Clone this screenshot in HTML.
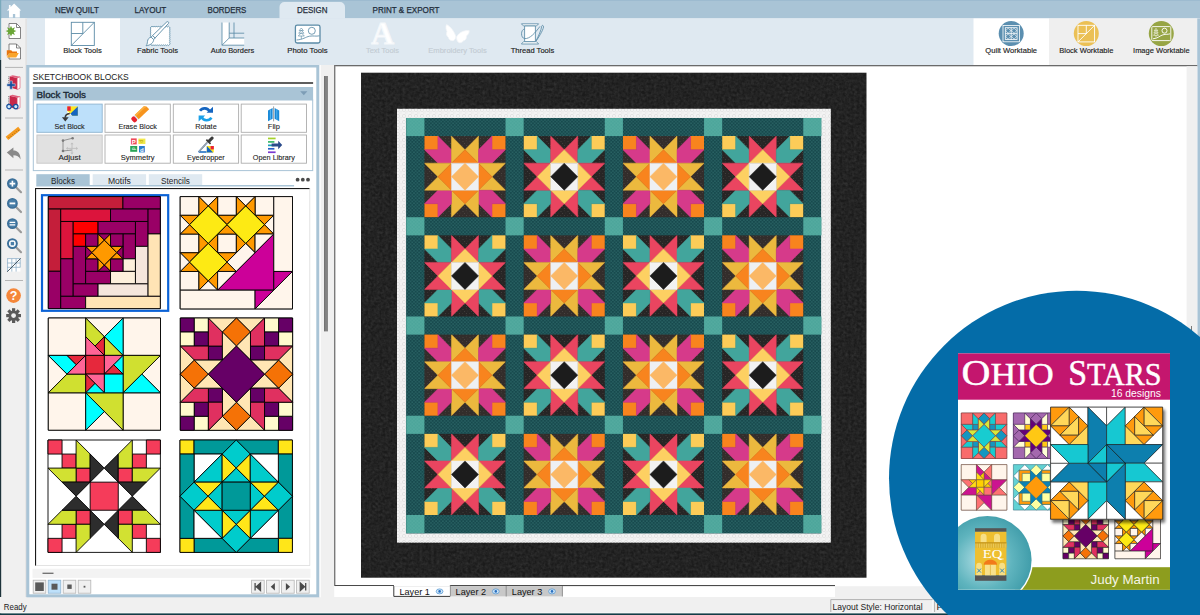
<!DOCTYPE html>
<html><head><meta charset="utf-8"><title>EQ8 - Ohio Stars</title>
<style>
html,body{margin:0;padding:0;background:#fff}
body{width:1200px;height:615px;overflow:hidden;font-family:"Liberation Sans",sans-serif}
svg{display:block}
</style></head><body>
<svg width="1200" height="615" viewBox="0 0 1200 615">
<defs>
<filter id="noiseB" x="0" y="0" width="100%" height="100%"><feTurbulence type="fractalNoise" baseFrequency="0.35" numOctaves="2" seed="3" result="n"/><feColorMatrix type="matrix" values="0 0 0 0 1  0 0 0 0 1  0 0 0 0 1  0.9 0.9 0.9 0 -0.95"/></filter>
<pattern id="dots" width="3.4" height="3.4" patternUnits="userSpaceOnUse"><circle cx="0.9" cy="0.9" r="0.75" fill="#3f8280" opacity="0.6"/><circle cx="2.6" cy="2.6" r="0.75" fill="#3f8280" opacity="0.6"/></pattern>
<pattern id="dots2" width="3.4" height="3.4" patternUnits="userSpaceOnUse"><circle cx="0.9" cy="0.9" r="0.6" fill="#2f8f88" opacity="0.5"/><circle cx="2.6" cy="2.6" r="0.6" fill="#2f8f88" opacity="0.5"/></pattern>
<pattern id="wb" width="6" height="6" patternUnits="userSpaceOnUse"><circle cx="2" cy="2" r="1.7" fill="none" stroke="#dedede" stroke-width="0.7"/><circle cx="5" cy="5" r="1.4" fill="none" stroke="#e4e4e4" stroke-width="0.6"/></pattern>
<pattern id="spk" width="7" height="7" patternUnits="userSpaceOnUse"><circle cx="1" cy="1.4" r="0.45" fill="#8a827c"/><circle cx="4.2" cy="0.8" r="0.35" fill="#7a726c"/><circle cx="2.6" cy="3.6" r="0.45" fill="#8a827c"/><circle cx="5.8" cy="3" r="0.35" fill="#6a625c"/><circle cx="0.8" cy="5.6" r="0.35" fill="#7a726c"/><circle cx="4.4" cy="5.4" r="0.45" fill="#8a827c"/></pattern>
<radialGradient id="eqg" cx="0.45" cy="0.5" r="0.6"><stop offset="0" stop-color="#b4e0e6"/><stop offset="0.55" stop-color="#5fb4be"/><stop offset="1" stop-color="#3a98a6"/></radialGradient>
<linearGradient id="barg" x1="0" x2="1" y1="0" y2="0"><stop offset="0" stop-color="#6e6e6e"/><stop offset="0.5" stop-color="#888"/><stop offset="1" stop-color="#7a7a7a"/></linearGradient>
<filter id="shadow" x="-10%" y="-10%" width="130%" height="130%"><feGaussianBlur in="SourceAlpha" stdDeviation="1.6"/><feOffset dx="2" dy="2.5"/><feComponentTransfer><feFuncA type="linear" slope="0.55"/></feComponentTransfer><feMerge><feMergeNode/><feMergeNode in="SourceGraphic"/></feMerge></filter>
</defs>
<rect x="0" y="0" width="1200" height="615" fill="#ffffff"/>
<rect x="0" y="0" width="1200" height="18.5" fill="#a9c4d6"/>
<rect x="0" y="0" width="1200" height="1" fill="#9dbbd0"/>
<rect x="26" y="18.5" width="1174" height="46.5" fill="#dfe9f1"/>
<path d="M279.5 18.6 V7 a5 5 0 0 1 5 -5 H340 a5 5 0 0 1 5 5 V18.6 Z" fill="#dfe9f1"/>
<text x="55" y="13.2" font-size="9" font-weight="normal" fill="#1f2d3a" text-anchor="start" font-family="Liberation Sans" textLength="43.8" lengthAdjust="spacingAndGlyphs" stroke="#1f2d3a" stroke-width="0.25">NEW QUILT</text>
<text x="134.5" y="13.2" font-size="9" font-weight="normal" fill="#1f2d3a" text-anchor="start" font-family="Liberation Sans" textLength="31.8" lengthAdjust="spacingAndGlyphs" stroke="#1f2d3a" stroke-width="0.25">LAYOUT</text>
<text x="207.5" y="13.2" font-size="9" font-weight="normal" fill="#1f2d3a" text-anchor="start" font-family="Liberation Sans" textLength="38.8" lengthAdjust="spacingAndGlyphs" stroke="#1f2d3a" stroke-width="0.25">BORDERS</text>
<text x="297" y="13.2" font-size="9" font-weight="normal" fill="#1f2d3a" text-anchor="start" font-family="Liberation Sans" textLength="30.5" lengthAdjust="spacingAndGlyphs" stroke="#1f2d3a" stroke-width="0.25">DESIGN</text>
<text x="372.5" y="13.2" font-size="9" font-weight="normal" fill="#1f2d3a" text-anchor="start" font-family="Liberation Sans" textLength="67" lengthAdjust="spacingAndGlyphs" stroke="#1f2d3a" stroke-width="0.25">PRINT &amp; EXPORT</text>
<path d="M14.1 3.6 L21.2 10.6 H19.8 V17.4 H15.2 V13.9 H12.9 V17.4 H9 V10.6 H6.8 L8.9 8.5 V4.9 H10.6 V6.9 Z" fill="#fff"/>
<rect x="45" y="18.5" width="75" height="46.5" fill="#ffffff"/>
<text x="82.5" y="53.4" font-size="8" font-weight="normal" fill="#222" text-anchor="middle" font-family="Liberation Sans" textLength="38.5" lengthAdjust="spacingAndGlyphs" stroke="#222" stroke-width="0.15">Block Tools</text>
<text x="157.5" y="53.4" font-size="8" font-weight="normal" fill="#222" text-anchor="middle" font-family="Liberation Sans" textLength="41" lengthAdjust="spacingAndGlyphs" stroke="#222" stroke-width="0.15">Fabric Tools</text>
<text x="232.5" y="53.4" font-size="8" font-weight="normal" fill="#222" text-anchor="middle" font-family="Liberation Sans" textLength="43.5" lengthAdjust="spacingAndGlyphs" stroke="#222" stroke-width="0.15">Auto Borders</text>
<text x="307.5" y="53.4" font-size="8" font-weight="normal" fill="#222" text-anchor="middle" font-family="Liberation Sans" textLength="40.5" lengthAdjust="spacingAndGlyphs" stroke="#222" stroke-width="0.15">Photo Tools</text>
<text x="382.5" y="53.4" font-size="8" font-weight="normal" fill="#c3ccd3" text-anchor="middle" font-family="Liberation Sans" textLength="33" lengthAdjust="spacingAndGlyphs" stroke="#c3ccd3" stroke-width="0.15">Text Tools</text>
<text x="457.5" y="53.4" font-size="8" font-weight="normal" fill="#c3ccd3" text-anchor="middle" font-family="Liberation Sans" textLength="58.5" lengthAdjust="spacingAndGlyphs" stroke="#c3ccd3" stroke-width="0.15">Embroidery Tools</text>
<text x="532.5" y="53.4" font-size="8" font-weight="normal" fill="#222" text-anchor="middle" font-family="Liberation Sans" textLength="43.5" lengthAdjust="spacingAndGlyphs" stroke="#222" stroke-width="0.15">Thread Tools</text>
<g fill="none" stroke="#5b8ba6" stroke-width="0.9"><rect x="71.3" y="22.3" width="23" height="23.2"/><path d="M71.3 45.5 L94.3 22.3 M71.3 33.5 H82.8 M82.8 22.3 V33.9"/></g>
<path d="M151 27 L152.022 26.2 L153.044 27 L154.067 26.2 L155.089 27 L156.111 26.2 L157.133 27 L158.156 26.2 L159.178 27 L160.2 26.2 L161.222 27 L162.244 26.2 L163.267 27 L164.289 26.2 L165.311 27 L166.333 26.2 L167.356 27 L168.378 26.2 L169.4 27 L170.2 27.9889 L169.4 28.9778 L170.2 29.9667 L169.4 30.9556 L170.2 31.9444 L169.4 32.9333 L170.2 33.9222 L169.4 34.9111 L170.2 35.9 L169.4 36.8889 L170.2 37.8778 L169.4 38.8667 L170.2 39.8556 L169.4 40.8444 L170.2 41.8333 L169.4 42.8222 L170.2 43.8111 L169.4 44.8 L168.378 45.6 L167.356 44.8 L166.333 45.6 L165.311 44.8 L164.289 45.6 L163.267 44.8 L162.244 45.6 L161.222 44.8 L160.2 45.6 L159.178 44.8 L158.156 45.6 L157.133 44.8 L156.111 45.6 L155.089 44.8 L154.067 45.6 L153.044 44.8 L152.022 45.6 L151 44.8 L150.2 43.8111 L151 42.8222 L150.2 41.8333 L151 40.8444 L150.2 39.8556 L151 38.8667 L150.2 37.8778 L151 36.8889 L150.2 35.9 L151 34.9111 L150.2 33.9222 L151 32.9333 L150.2 31.9444 L151 30.9556 L150.2 29.9667 L151 28.9778 L150.2 27.9889 L151 27 Z" fill="#fff" stroke="#5b8ba6" stroke-width="0.8"/>
<g stroke="#5b8ba6" stroke-width="0.9" fill="#fff" stroke-linejoin="round"><path d="M166.9 21.8 c1.2 -0.6 2.2 0.4 1.6 1.6 l-13.4 14.6 l-2.6 -2.4 Z"/><path d="M152.5 35.6 l2.6 2.4 l-1.4 1.6 l-2.6 -2.4 Z"/><path d="M151.1 37.2 l2.6 2.4 c-0.2 3 -3 5.6 -7.6 6.2 c1.6 -1.8 1 -4 1.8 -6 c0.6 -1.6 1.8 -2.2 3.2 -2.6 Z"/></g>
<path d="M222 22.5 V45.2 H244.2 V38 H229.2 V22.5 Z" fill="#fff"/><g fill="none" stroke="#5b8ba6" stroke-width="0.85"><path d="M222 22.5 V45.2 H244.2 M229.2 22.5 V38 H244.2 M222 45.2 L229.2 38 M234 22.5 V38 M229.2 33.2 H244.2"/></g>
<g fill="none" stroke="#5b8ba6" stroke-width="0.85"><rect x="295.4" y="25.2" width="24.6" height="17.8" rx="1.8" fill="#fff" stroke-width="1.3"/><circle cx="311.8" cy="30.8" r="3.5"/><path d="M296.5 40 C303 39.6 305.5 37 309.5 36.2 C313 35.5 316 36.6 319.5 35.8"/><path d="M301.3 28 l-2.1 2.6 h4.2 Z M301.3 30.2 l-2.6 3 h5.2 Z M301.3 32.8 l-3 3.2 h6 Z M301.3 36 v3" stroke-width="0.65"/></g>
<text x="382.6" y="44.3" font-size="31.5" font-weight="bold" fill="#ffffff" text-anchor="middle" font-family="Liberation Serif" stroke="#f4f7fa" stroke-width="1.1">A</text>
<g fill="#ffffff" stroke="#f2f5f8" stroke-width="0.8"><path d="M455.8 36.2 C454.2 31.5 450.5 26.5 446.6 24.6 C445.4 27 446 29.6 447 31.4 C446 33.6 446.6 36.2 448.4 37.4 C448.8 39.6 451.4 41.4 453.6 40.4 C455 39.8 455.8 38 455.8 36.2 Z"/><path d="M456.6 37 C458.6 32.8 463.8 30 469.2 30.6 C469.4 33 468 35 466.4 36 C466.8 38.4 465.4 40.6 463.2 40.8 C462.6 42.4 460 43.4 458.4 42.2 C457 41.2 456.4 39 456.6 37 Z"/></g>
<g fill="none" stroke="#5b8ba6" stroke-width="0.85" stroke-linejoin="round"><path d="M521.4 23.8 h17.2 l-2.2 2.2 h-12.8 Z" fill="#fff"/><path d="M523.6 41.6 h12.8 l2.2 2.4 h-17.2 Z" fill="#fff"/><rect x="524.6" y="26" width="10.8" height="15.6" fill="#fff"/><path d="M524.6 29 C520.5 29.5 520.5 38 524.6 38.6 C530 39 535 33 540 26.4"/><path d="M543.4 26 C544.4 27.6 539.6 36.4 536 41 C538.6 36 541.4 29.6 541.6 26.6 C541.8 25.2 542.8 25 543.4 26 Z"/></g>
<rect x="973.5" y="18.5" width="75.5" height="46.5" fill="#ffffff"/>
<rect x="1049" y="18.5" width="148.5" height="46.5" fill="#efefef"/>
<circle cx="1011.2" cy="33.6" r="12.5" fill="#5b8fb0"/>
<text x="1011.2" y="53.4" font-size="8" font-weight="normal" fill="#222" text-anchor="middle" font-family="Liberation Sans" textLength="51.7" lengthAdjust="spacingAndGlyphs" stroke="#222" stroke-width="0.15">Quilt Worktable</text>
<circle cx="1086.3" cy="33.6" r="12.5" fill="#ebc055"/>
<text x="1086.3" y="53.4" font-size="8" font-weight="normal" fill="#222" text-anchor="middle" font-family="Liberation Sans" textLength="54.2" lengthAdjust="spacingAndGlyphs" stroke="#222" stroke-width="0.15">Block Worktable</text>
<circle cx="1161.3" cy="33.6" r="12.5" fill="#97a545"/>
<text x="1161.3" y="53.4" font-size="8" font-weight="normal" fill="#222" text-anchor="middle" font-family="Liberation Sans" textLength="56.5" lengthAdjust="spacingAndGlyphs" stroke="#222" stroke-width="0.15">Image Worktable</text>
<g fill="none" stroke="#fff" stroke-width="0.8"><rect x="1003" y="25.4" width="16.4" height="16.4"/><rect x="1005.3" y="27.7" width="11.8" height="11.8"/><path d="M1005.3 33.6 h11.8 M1011.2 27.7 v11.8"/><path d="M1008.2 28.2 l2.6 2.5 l-2.6 2.5 l-2.6 -2.5 Z M1014.1 28.2 l2.6 2.5 l-2.6 2.5 l-2.6 -2.5 Z M1008.2 34 l2.6 2.5 l-2.6 2.5 l-2.6 -2.5 Z M1014.1 34 l2.6 2.5 l-2.6 2.5 l-2.6 -2.5 Z" stroke-width="0.6"/></g>
<g fill="none" stroke="#fff" stroke-width="0.9"><rect x="1078" y="25.3" width="16.6" height="16.6"/><path d="M1078 41.9 L1094.6 25.3 M1078 33.6 h8.3 M1086.3 25.3 v8.6"/></g>
<g fill="none" stroke="#fff" stroke-width="0.9"><rect x="1151.8" y="26.6" width="19" height="14" rx="1"/><circle cx="1164.5" cy="30.7" r="2.5"/><path d="M1153 38.8 C1158 38.4 1160 35.6 1163 34.8 C1166 34 1168 34.6 1170 33.8"/><path d="M1156 28.4 l-1.8 2.4 h3.6 Z M1156 30.4 l-2.2 2.6 h4.4 Z M1156 32.6 l-2.5 2.7 h5 Z M1156 35.3 v2" stroke-width="0.6"/></g>
<rect x="1197.3" y="18.5" width="2.7" height="600" fill="#a9c4d6"/>
<rect x="334" y="65" width="863.3" height="1.3" fill="#6a6a6a"/>
<rect x="0" y="18.5" width="27" height="579" fill="#fbfbfb"/>
<rect x="1.5" y="18.5" width="24.2" height="578.5" fill="#f0f0f0"/>
<rect x="0" y="0" width="1.2" height="60" fill="#7aaabc"/>
<rect x="0" y="60" width="1.2" height="555" fill="#1d333b"/>
<rect x="25.7" y="18.5" width="0.8" height="578.5" fill="#c9c9c9"/>
<rect x="26.5" y="65" width="3" height="532" fill="#a9c4d6"/>
<rect x="5" y="66.9" width="18" height="1" fill="#b5b5b5"/>
<rect x="5" y="117.5" width="18" height="1" fill="#b5b5b5"/>
<rect x="5" y="169.5" width="18" height="1" fill="#b5b5b5"/>
<rect x="5" y="280" width="18" height="1" fill="#b5b5b5"/>
<path d="M9 23.5 h7.5 l4 4 v11 h-11.5 Z" fill="#fff" stroke="#666" stroke-width="0.8"/><path d="M16.5 23.5 v4 h4" fill="none" stroke="#666" stroke-width="0.8"/>
<path d="M11 25.8 l1.2 2.6 l2.7 -1.2 l-1.2 2.7 l2.7 1.2 l-2.7 1.2 l1.2 2.7 l-2.7 -1.2 l-1.2 2.7 l-1.2 -2.7 l-2.7 1.2 l1.2 -2.7 l-2.7 -1.2 l2.7 -1.2 l-1.2 -2.7 l2.7 1.2 Z" fill="#6aa636"/>
<path d="M9 44 h7.5 l4 4 v11 h-11.5 Z" fill="#fff" stroke="#666" stroke-width="0.8"/><path d="M16.5 44 v4 h4" fill="none" stroke="#666" stroke-width="0.8"/>
<path d="M6.8 50.2 h4.4 l1.2 1.4 h4.6 v1.6 h-8 l-2.2 3.4 Z" fill="#e8760e"/><path d="M9.4 53 h9.4 l-2.6 4.4 h-9.4 Z" fill="#f9a52c"/>
<path d="M9.6 76.2 l7.6 1.8 v11.6 l-7.6 -2 Z" fill="#c8284a"/><path d="M17.2 78 l2.8 -1.2 v11.4 l-2.8 1.4 Z" fill="#fff" stroke="#d8506a" stroke-width="0.6"/><path d="M9.6 76.2 l7.6 1.8 l2.8 -1.2 l-7.4 -1.6 Z" fill="#e0607c"/><path d="M8.7 76.4 v8.4" stroke="#555" stroke-width="0.8" stroke-dasharray="0.9 0.9"/>
<path d="M6.9 83.8 h2.9 v-2.9 h2.5 v2.9 h2.9 v2.5 h-2.9 v2.9 h-2.5 v-2.9 h-2.9 Z" fill="#174f9e" stroke="#f0f0f0" stroke-width="0.5"/>
<path d="M9.6 95.8 l7.6 1.8 v11.6 l-7.6 -2 Z" fill="#c8284a"/><path d="M17.2 97.6 l2.8 -1.2 v11.4 l-2.8 1.4 Z" fill="#fff" stroke="#d8506a" stroke-width="0.6"/><path d="M9.6 95.8 l7.6 1.8 l2.8 -1.2 l-7.4 -1.6 Z" fill="#e0607c"/><path d="M8.7 96 v8.4" stroke="#555" stroke-width="0.8" stroke-dasharray="0.9 0.9"/>
<g fill="#cfe9fa" stroke="#174f9e" stroke-width="1.2"><circle cx="9" cy="106.6" r="2.2"/><circle cx="15.8" cy="106.6" r="2.2"/></g><path d="M11.2 106.4 h2.4" stroke="#174f9e" stroke-width="1.1"/>
<g transform="translate(13.2 133.4) rotate(-38.6)"><rect x="-8" y="-2" width="16" height="4" fill="#f59a1e"/><path d="M-6 0.2 v1.2 M-3.6 0.2 v1.2 M-1.2 0.2 v1.2 M1.2 0.2 v1.2 M3.6 0.2 v1.2 M6 0.2 v1.2" stroke="#8a5a10" stroke-width="0.7"/></g>
<path d="M6.8 152.6 l6.6 -5 v3 c4 0 7 2.6 7.2 8.8 c-1.6 -3.2 -3.8 -4.2 -7.2 -4.2 v3 Z" fill="#8a8a8a"/>
<path d="M16 187.2 l5 5" stroke="#9a9a9a" stroke-width="2.2" stroke-linecap="round"/>
<circle cx="12.4" cy="183.6" r="4.6" fill="#4a7fa8" stroke="#3a6e98" stroke-width="1.6"/>
<path d="M9.6 183.6 h5.6 M12.4 180.8 v5.6" stroke="#fff" stroke-width="1.6"/>
<path d="M16 207 l5 5" stroke="#9a9a9a" stroke-width="2.2" stroke-linecap="round"/>
<circle cx="12.4" cy="203.4" r="4.6" fill="#4a7fa8" stroke="#3a6e98" stroke-width="1.6"/>
<path d="M9.6 203.4 h5.6" stroke="#fff" stroke-width="1.8"/>
<path d="M16 227.2 l5 5" stroke="#9a9a9a" stroke-width="2.2" stroke-linecap="round"/>
<circle cx="12.4" cy="223.6" r="4.6" fill="#4a7fa8" stroke="#3a6e98" stroke-width="1.6"/>
<path d="M9.6 222.3 h5.6 M9.6 224.9 h5.6" stroke="#fff" stroke-width="1.3"/>
<path d="M16 247.2 l5 5" stroke="#9a9a9a" stroke-width="2.2" stroke-linecap="round"/>
<circle cx="12.4" cy="243.6" r="4.6" fill="#4a7fa8" stroke="#3a6e98" stroke-width="1.6"/>
<circle cx="12.4" cy="243.6" r="3.4" fill="#fff"/><rect x="10.7" y="241.9" width="3.4" height="3.4" fill="#4a7fa8"/>
<rect x="7.2" y="258.6" width="13.2" height="13" fill="#fff"/><g stroke="#8fb0c8" stroke-width="0.8" fill="none"><path d="M7.2 258.6 h13.2 M7.2 263 h13.2 M7.2 267.3 h13.2 M7.6 258.6 v13 M11.8 258.6 v13 M16.1 258.6 v13 M20.2 258.6 v8.6"/></g><path d="M7.2 271.8 L20.6 258.4" stroke="#3a4a55" stroke-width="0.9"/>
<circle cx="13.6" cy="295.6" r="7.3" fill="#f5873a"/>
<text x="13.6" y="300.2" font-size="12.5" font-weight="bold" fill="#fff" text-anchor="middle" font-family="Liberation Sans">?</text>
<g transform="translate(13.6 315.6)"><g fill="#5a5a5a"><rect x="-1.6" y="-7.4" width="3.2" height="4" transform="rotate(0)"/><rect x="-1.6" y="-7.4" width="3.2" height="4" transform="rotate(45)"/><rect x="-1.6" y="-7.4" width="3.2" height="4" transform="rotate(90)"/><rect x="-1.6" y="-7.4" width="3.2" height="4" transform="rotate(135)"/><rect x="-1.6" y="-7.4" width="3.2" height="4" transform="rotate(180)"/><rect x="-1.6" y="-7.4" width="3.2" height="4" transform="rotate(225)"/><rect x="-1.6" y="-7.4" width="3.2" height="4" transform="rotate(270)"/><rect x="-1.6" y="-7.4" width="3.2" height="4" transform="rotate(315)"/></g><circle r="5.2" fill="#5a5a5a"/><circle r="2.4" fill="#f0f0f0"/></g>
<rect x="0" y="597" width="1200" height="16.4" fill="#f0f0f0"/>
<rect x="0" y="612.5" width="1200" height="0.9" fill="#fafafa"/>
<rect x="0" y="613.4" width="1200" height="1.6" fill="#123c46"/>
<text x="3.8" y="609.6" font-size="9.5" font-weight="normal" fill="#222" text-anchor="start" font-family="Liberation Sans" textLength="22.8" lengthAdjust="spacingAndGlyphs">Ready</text>
<rect x="830.8" y="599.6" width="102" height="12.4" fill="#f0f0f0"/>
<path d="M830.8 612 V599.6 H932.8" fill="none" stroke="#a0a0a0" stroke-width="0.8"/><path d="M932.8 599.6 V612" fill="none" stroke="#fff" stroke-width="0.8"/>
<path d="M934.6 612 V599.6 H1000" fill="none" stroke="#a0a0a0" stroke-width="0.8"/>
<text x="832.6" y="609.6" font-size="9.5" font-weight="normal" fill="#222" text-anchor="start" font-family="Liberation Sans" textLength="90" lengthAdjust="spacingAndGlyphs">Layout Style: Horizontal</text>
<text x="936.6" y="609.6" font-size="9.5" font-weight="normal" fill="#222" text-anchor="start" font-family="Liberation Sans">Fi</text>
<rect x="26.5" y="65" width="293" height="532.3" fill="#a9c4d6"/>
<rect x="29.3" y="67.5" width="287" height="526.8" fill="#ffffff"/>
<rect x="319.5" y="65" width="1.6" height="532.3" fill="#fbfbfb"/>
<rect x="321" y="65" width="13.2" height="532.3" fill="#f0f0f0"/>
<rect x="324" y="76" width="3.9" height="255.4" fill="url(#barg)"/>
<rect x="334" y="65" width="1.4" height="521" fill="#7a7a7a"/>
<text x="32.8" y="80.1" font-size="9.4" font-weight="normal" fill="#222" text-anchor="start" font-family="Liberation Sans" textLength="96" lengthAdjust="spacingAndGlyphs">SKETCHBOOK BLOCKS</text>
<rect x="32.8" y="82.3" width="280.3" height="1.4" fill="#1a1a1a"/>
<rect x="32.8" y="87" width="280.3" height="13.2" fill="#a9c4d6"/>
<text x="36.4" y="97.5" font-size="9.3" font-weight="normal" fill="#1c2a36" text-anchor="start" font-family="Liberation Sans" textLength="49.6" lengthAdjust="spacingAndGlyphs" stroke="#1c2a36" stroke-width="0.35">Block Tools</text>
<path d="M300.2 91.2 h7.2 l-3.6 4 Z" fill="#7d9db6"/>
<rect x="33.3" y="100" width="279.4" height="70.6" fill="#fff" stroke="#a9c4d6" stroke-width="1"/>
<rect x="36.9" y="104.1" width="65.3" height="28.2" fill="#bde0fa" stroke="#8fb4d0" stroke-width="0.9"/>
<text x="69.55" y="128.6" font-size="8" font-weight="normal" fill="#1f1f1f" text-anchor="middle" font-family="Liberation Sans" textLength="30.3" lengthAdjust="spacingAndGlyphs" stroke="#1f1f1f" stroke-width="0.12">Set Block</text>
<rect x="105" y="104.1" width="65.3" height="28.2" fill="#ffffff" stroke="#adadad" stroke-width="0.9"/>
<text x="137.65" y="128.6" font-size="8" font-weight="normal" fill="#1f1f1f" text-anchor="middle" font-family="Liberation Sans" textLength="38.5" lengthAdjust="spacingAndGlyphs" stroke="#1f1f1f" stroke-width="0.12">Erase Block</text>
<rect x="173.3" y="104.1" width="65.3" height="28.2" fill="#ffffff" stroke="#adadad" stroke-width="0.9"/>
<text x="205.95" y="128.6" font-size="8" font-weight="normal" fill="#1f1f1f" text-anchor="middle" font-family="Liberation Sans" textLength="21.6" lengthAdjust="spacingAndGlyphs" stroke="#1f1f1f" stroke-width="0.12">Rotate</text>
<rect x="241.2" y="104.1" width="65.3" height="28.2" fill="#ffffff" stroke="#adadad" stroke-width="0.9"/>
<text x="273.85" y="128.6" font-size="8" font-weight="normal" fill="#1f1f1f" text-anchor="middle" font-family="Liberation Sans" textLength="12" lengthAdjust="spacingAndGlyphs" stroke="#1f1f1f" stroke-width="0.12">Flip</text>
<rect x="36.9" y="135" width="65.3" height="28.2" fill="#e1e1e1" stroke="#c6c6c6" stroke-width="0.9"/>
<text x="69.55" y="159.5" font-size="8" font-weight="normal" fill="#1f1f1f" text-anchor="middle" font-family="Liberation Sans" textLength="22.2" lengthAdjust="spacingAndGlyphs" stroke="#1f1f1f" stroke-width="0.12">Adjust</text>
<rect x="105" y="135" width="65.3" height="28.2" fill="#ffffff" stroke="#adadad" stroke-width="0.9"/>
<text x="137.65" y="159.5" font-size="8" font-weight="normal" fill="#1f1f1f" text-anchor="middle" font-family="Liberation Sans" textLength="33.8" lengthAdjust="spacingAndGlyphs" stroke="#1f1f1f" stroke-width="0.12">Symmetry</text>
<rect x="173.3" y="135" width="65.3" height="28.2" fill="#ffffff" stroke="#adadad" stroke-width="0.9"/>
<text x="205.95" y="159.5" font-size="8" font-weight="normal" fill="#1f1f1f" text-anchor="middle" font-family="Liberation Sans" textLength="37.7" lengthAdjust="spacingAndGlyphs" stroke="#1f1f1f" stroke-width="0.12">Eyedropper</text>
<rect x="241.2" y="135" width="65.3" height="28.2" fill="#ffffff" stroke="#adadad" stroke-width="0.9"/>
<text x="273.85" y="159.5" font-size="8" font-weight="normal" fill="#1f1f1f" text-anchor="middle" font-family="Liberation Sans" textLength="42" lengthAdjust="spacingAndGlyphs" stroke="#1f1f1f" stroke-width="0.12">Open Library</text>
<g><rect x="67.3" y="106.4" width="10.5" height="9.4" fill="#ffe61e"/><path d="M77.8 106.4 v9.4 h-9.6 Z" fill="#1565c0"/><path d="M67.3 110.8 v5 h5 Z" fill="#fff"/><rect x="67.3" y="106.4" width="3.4" height="4.4" fill="#e8203a"/><path d="M69.8 113.6 c-3.2 0.4 -4.6 2 -4.6 4.2" fill="none" stroke="#3a3a3a" stroke-width="1.5"/><path d="M61.9 117.3 h6.8 l-3.4 4.3 Z" fill="#3a3a3a"/></g>
<g transform="translate(140.3 113.6) rotate(-43)"><path d="M-5 -2.9 H7.6 L9.4 -0.6 V2.9 H-5 Z" fill="#f7941d"/><path d="M-5 -2.9 H7.6 L9.4 -0.6 L7 -1.2 H-5 Z" fill="#fbb040"/><rect x="-6.2" y="-2.9" width="1.2" height="5.8" fill="#d6e6f2"/><rect x="-10.6" y="-3" width="4.5" height="6" rx="1.8" fill="#e8232e"/></g>
<g fill="none" stroke-width="2.6"><path d="M200 110.8 a5.6 5.6 0 0 1 9.6 0.6" stroke="#1565c0"/><path d="M211.4 117.6 a5.6 5.6 0 0 1 -9.8 -0.4" stroke="#1aa0e8"/></g><path d="M206.6 112.8 h6.4 v-6 Z" fill="#1565c0"/><path d="M205.2 115.6 h-6.6 v6 Z" fill="#1aa0e8"/>
<path d="M272.6 108 l-4.6 2.6 v10.6 l4.6 -2.4 Z" fill="#1a8ad8"/><path d="M274.6 108 l4.6 2.6 v10.6 l-4.6 -2.4 Z" fill="#1a8ad8"/><path d="M270.4 109.2 v10.8 M276.8 109.2 v10.8" stroke="#56b4f0" stroke-width="1"/><rect x="273.1" y="106.4" width="1" height="15" fill="#9aa0a6"/>
<g stroke="#8a8a8a" stroke-width="0.9" fill="none"><path d="M63 140.6 l9.6 -2.4 M63 140.6 v10.4 l9 -1"/><path d="M72 143.8 v9 M67.4 148.4 h9.4" stroke="#bdbdbd"/></g><g fill="#7a7a7a"><circle cx="63" cy="140.6" r="1.3"/><circle cx="72.6" cy="138.2" r="1.3"/><circle cx="63" cy="151" r="1.3"/></g><path d="M72 142.4 l1.6 1.8 h-3.2 Z M72 154.4 l1.6 -1.8 h-3.2 Z M66 148.4 l1.8 -1.6 v3.2 Z M78 148.4 l-1.8 -1.6 v3.2 Z" fill="#bdbdbd"/>
<rect x="130.9" y="138.4" width="5.8" height="6" fill="#ee4a5a"/><rect x="138.4" y="138.6" width="7" height="5.4" fill="#f2e84a"/><rect x="130.2" y="146" width="7" height="5.8" fill="#2aa456"/><rect x="139" y="146" width="5.8" height="6.4" fill="#2a7cd0"/>
<text x="133.8" y="143.8" font-size="6" font-weight="bold" fill="#fff" text-anchor="middle" font-family="Liberation Sans">P</text>
<text x="141.9" y="151.6" font-size="6" font-weight="bold" fill="#fff" text-anchor="middle" font-family="Liberation Sans">d</text>
<text x="141.9" y="143.4" font-size="5" font-weight="bold" fill="#c8b820" text-anchor="middle" font-family="Liberation Sans" transform="rotate(90 141.9 141.4)">p</text>
<text x="133.7" y="150.6" font-size="5" font-weight="bold" fill="#bfe6cc" text-anchor="middle" font-family="Liberation Sans" transform="rotate(90 133.7 148.9)">d</text>
<path d="M198.6 152 l8.6 -9.4 M198.6 152 h8" stroke="#1565c0" stroke-width="1.5" fill="none"/><path d="M199 151.6 l9 -10.4" stroke="#a8a8a8" stroke-width="1.4"/><g transform="translate(209.6 140.6) rotate(45)"><rect x="-1.5" y="-5" width="3" height="7" rx="1.2" fill="#3a3a3a"/><rect x="-3" y="0.8" width="6" height="1.6" fill="#3a3a3a"/></g><rect x="206.8" y="146" width="7" height="6.4" fill="#ffe61e"/><path d="M206.8 146 v6.4 h6.4 Z" fill="#1565c0"/><rect x="210.6" y="146" width="3.2" height="3.4" fill="#e8203a"/>
<rect x="268" y="137.6" width="7.6" height="1.7" fill="#a4d12a"/>
<rect x="268" y="141.05" width="6.4" height="1.7" fill="#3ab86a"/>
<rect x="268" y="144.5" width="6.4" height="1.7" fill="#1aa0b8"/>
<rect x="268" y="147.95" width="6.4" height="1.7" fill="#2a60c8"/>
<rect x="268" y="151.4" width="7.6" height="1.7" fill="#7a3ad0"/>
<path d="M271.6 143.4 h6.6 v-2.6 l4 4.2 l-4 4.2 v-2.6 h-6.6 Z" fill="#2a4a8a"/>
<rect x="36.3" y="174.2" width="53.4" height="11.2" fill="#a9c4d6"/>
<rect x="92.7" y="174.2" width="53.4" height="11.2" fill="#dfe9f1"/>
<rect x="148.8" y="174.2" width="53.4" height="11.2" fill="#dfe9f1"/>
<rect x="36.3" y="185" width="257.8" height="1.5" fill="#a9c4d6"/>
<text x="63" y="183.6" font-size="8.5" font-weight="normal" fill="#1f1f1f" text-anchor="middle" font-family="Liberation Sans" textLength="24" lengthAdjust="spacingAndGlyphs">Blocks</text>
<text x="119.4" y="183.6" font-size="8.5" font-weight="normal" fill="#1f1f1f" text-anchor="middle" font-family="Liberation Sans" textLength="23" lengthAdjust="spacingAndGlyphs">Motifs</text>
<text x="175.5" y="183.6" font-size="8.5" font-weight="normal" fill="#1f1f1f" text-anchor="middle" font-family="Liberation Sans" textLength="28.8" lengthAdjust="spacingAndGlyphs">Stencils</text>
<circle cx="297.6" cy="179.7" r="1.9" fill="#4a4a4a"/>
<circle cx="302.8" cy="179.7" r="1.9" fill="#4a4a4a"/>
<circle cx="308" cy="179.7" r="1.9" fill="#4a4a4a"/>
<rect x="35" y="188" width="275" height="1.1" fill="#1a1a1a"/>
<rect x="35" y="188" width="1.1" height="377.6" fill="#1a1a1a"/>
<rect x="309.4" y="188" width="0.8" height="377.6" fill="#dcdcdc"/>
<rect x="36" y="565.2" width="274" height="0.8" fill="#dcdcdc"/>
<rect x="42" y="195.2" width="126.2" height="115.6" fill="#fff" stroke="#0b62d6" stroke-width="2.2"/>
<svg x="48.3" y="196.6" width="112" height="112" viewBox="0 0 9 9" overflow="visible"><g stroke="#000" stroke-width="0.07232" stroke-linejoin="miter" stroke-miterlimit="2"><polygon points="0,0 9,0 9,9 0,9" fill="#990066"/><polygon points="0,0 6,0 6,1 0,1" fill="#c41e3a"/><polygon points="6,0 9,0 9,1 6,1" fill="#990066"/><polygon points="0,1 1,1 1,6 0,6" fill="#c41e3a"/><polygon points="0,6 1,6 1,9 0,9" fill="#990066"/><polygon points="1,8 3,8 3,9 1,9" fill="#990066"/><polygon points="3,8 9,8 9,9 3,9" fill="#ffe4b5"/><polygon points="8,1 9,1 9,3 8,3" fill="#990066"/><polygon points="8,3 9,3 9,8 8,8" fill="#ffe4b5"/><polygon points="1,1 5,1 5,2 1,2" fill="#dc143c"/><polygon points="5,1 8,1 8,2 5,2" fill="#990066"/><polygon points="1,2 2,2 2,5 1,5" fill="#dc143c"/><polygon points="1,5 2,5 2,8 1,8" fill="#990066"/><polygon points="2,7 4,7 4,8 2,8" fill="#990066"/><polygon points="4,7 8,7 8,8 4,8" fill="#f5e6dc"/><polygon points="7,2 8,2 8,4 7,4" fill="#990066"/><polygon points="7,4 8,4 8,7 7,7" fill="#f5e6dc"/><polygon points="2,2 4,2 4,3 2,3" fill="#ff0000"/><polygon points="4,2 7,2 7,3 4,3" fill="#990066"/><polygon points="2,3 3,3 3,4 2,4" fill="#ff0000"/><polygon points="2,4 3,4 3,7 2,7" fill="#990066"/><polygon points="3,6 5,6 5,7 3,7" fill="#990066"/><polygon points="5,6 7,6 7,7 5,7" fill="#fdf0dc"/><polygon points="6,3 7,3 7,5 6,5" fill="#990066"/><polygon points="6,5 7,5 7,6 6,6" fill="#fdf0dc"/><polygon points="3,3 4,3 4,4 3,4" fill="#990066"/><polygon points="5,3 6,3 6,4 5,4" fill="#990066"/><polygon points="3,5 4,5 4,6 3,6" fill="#990066"/><polygon points="5,5 6,5 6,6 5,6" fill="#990066"/><polygon points="4,3 5,3 4.5,3.5" fill="#990066"/><polygon points="5,3 5,4 4.5,3.5" fill="#ff9900"/><polygon points="4,4 4,3 4.5,3.5" fill="#ff9900"/><polygon points="5,4 6,4 5.5,4.5" fill="#ff9900"/><polygon points="6,4 6,5 5.5,4.5" fill="#990066"/><polygon points="6,5 5,5 5.5,4.5" fill="#ff9900"/><polygon points="5,5 5,6 4.5,5.5" fill="#ff9900"/><polygon points="5,6 4,6 4.5,5.5" fill="#990066"/><polygon points="4,6 4,5 4.5,5.5" fill="#ff9900"/><polygon points="3,4 4,4 3.5,4.5" fill="#ff9900"/><polygon points="4,5 3,5 3.5,4.5" fill="#ff9900"/><polygon points="3,5 3,4 3.5,4.5" fill="#990066"/><polygon points="4.5,3.5 5.5,4.5 4.5,5.5 3.5,4.5" fill="#ff9900"/></g></svg>
<svg x="180.2" y="196.6" width="112.3" height="112.3" viewBox="0 0 6 6" overflow="visible"><g stroke="#000" stroke-width="0.04809" stroke-linejoin="miter" stroke-miterlimit="2"><polygon points="0,0 6,0 6,6 0,6" fill="#fff5eb"/><polygon points="0,0 1,0 1,1 0,1" fill="#fff5eb"/><polygon points="2,0 3,0 3,1 2,1" fill="#fff5eb"/><polygon points="4,0 5,0 5,1 4,1" fill="#fff5eb"/><polygon points="0,2 1,2 1,3 0,3" fill="#fff5eb"/><polygon points="2,2 3,2 3,3 2,3" fill="#fff5eb"/><polygon points="0,4 1,4 1,5 0,5" fill="#fff5eb"/><polygon points="1,1 2,1 2,2 1,2" fill="#fdea14"/><polygon points="3,1 4,1 4,2 3,2" fill="#fdea14"/><polygon points="1,3 2,3 2,4 1,4" fill="#fdea14"/><polygon points="1,0 2,0 1.5,0.5" fill="#fff5eb"/><polygon points="2,0 2,1 1.5,0.5" fill="#ff9900"/><polygon points="2,1 1,1 1.5,0.5" fill="#fdea14"/><polygon points="1,1 1,0 1.5,0.5" fill="#ff9900"/><polygon points="3,0 4,0 3.5,0.5" fill="#fff5eb"/><polygon points="4,0 4,1 3.5,0.5" fill="#ff9900"/><polygon points="4,1 3,1 3.5,0.5" fill="#fdea14"/><polygon points="3,1 3,0 3.5,0.5" fill="#ff9900"/><polygon points="0,1 1,1 0.5,1.5" fill="#ff9900"/><polygon points="1,1 1,2 0.5,1.5" fill="#fdea14"/><polygon points="1,2 0,2 0.5,1.5" fill="#ff9900"/><polygon points="0,2 0,1 0.5,1.5" fill="#fff5eb"/><polygon points="2,1 3,1 2.5,1.5" fill="#ff9900"/><polygon points="3,1 3,2 2.5,1.5" fill="#fdea14"/><polygon points="3,2 2,2 2.5,1.5" fill="#ff9900"/><polygon points="2,2 2,1 2.5,1.5" fill="#fdea14"/><polygon points="4,1 5,1 4.5,1.5" fill="#ff9900"/><polygon points="5,1 5,2 4.5,1.5" fill="#fff5eb"/><polygon points="5,2 4,2 4.5,1.5" fill="#ff9900"/><polygon points="4,2 4,1 4.5,1.5" fill="#fdea14"/><polygon points="1,2 2,2 1.5,2.5" fill="#fdea14"/><polygon points="2,2 2,3 1.5,2.5" fill="#ff9900"/><polygon points="2,3 1,3 1.5,2.5" fill="#fdea14"/><polygon points="1,3 1,2 1.5,2.5" fill="#ff9900"/><polygon points="3,2 4,2 3.5,2.5" fill="#fdea14"/><polygon points="4,2 4,3 3.5,2.5" fill="#ff9900"/><polygon points="4,3 3,3 3.5,2.5" fill="#fff5eb"/><polygon points="3,3 3,2 3.5,2.5" fill="#ff9900"/><polygon points="0,3 1,3 0.5,3.5" fill="#ff9900"/><polygon points="1,3 1,4 0.5,3.5" fill="#fdea14"/><polygon points="1,4 0,4 0.5,3.5" fill="#ff9900"/><polygon points="0,4 0,3 0.5,3.5" fill="#fff5eb"/><polygon points="2,3 3,3 2.5,3.5" fill="#ff9900"/><polygon points="3,3 3,4 2.5,3.5" fill="#fff5eb"/><polygon points="3,4 2,4 2.5,3.5" fill="#ff9900"/><polygon points="2,4 2,3 2.5,3.5" fill="#fdea14"/><polygon points="1,4 2,4 1.5,4.5" fill="#fdea14"/><polygon points="2,4 2,5 1.5,4.5" fill="#ff9900"/><polygon points="2,5 1,5 1.5,4.5" fill="#fff5eb"/><polygon points="1,5 1,4 1.5,4.5" fill="#ff9900"/><polygon points="3.5,2.5 4,3 3,4 2.5,3.5" fill="#fff5eb"/><polygon points="4,2 5,2 4,3" fill="#fff5eb"/><polygon points="2,4 3,4 2,5" fill="#fff5eb"/><polygon points="5,2 5,5 2,5" fill="#cc0099"/><polygon points="5,0 6,0 6,4 5,4" fill="#fff5eb"/><polygon points="0,5 4,5 4,6 0,6" fill="#fff5eb"/><polygon points="5,4 6,4 5,5" fill="#cc0099"/><polygon points="4,5 5,5 4,6" fill="#cc0099"/><polygon points="6,4 6,6 4,6" fill="#fff5eb"/><polygon points="1.5,0.5 2.5,1.5 1.5,2.5 0.5,1.5" fill="#fdea14"/><polygon points="3.5,0.5 4.5,1.5 3.5,2.5 2.5,1.5" fill="#fdea14"/><polygon points="1.5,2.5 2.5,3.5 1.5,4.5 0.5,3.5" fill="#fdea14"/></g></svg>
<svg x="48.3" y="318" width="112.2" height="112.2" viewBox="0 0 6 6" overflow="visible"><g stroke="#000" stroke-width="0.04813" stroke-linejoin="miter" stroke-miterlimit="2"><polygon points="0,0 6,0 6,6 0,6" fill="#fff5eb"/><polygon points="0,0 2,0 2,2 0,2" fill="#fff5eb"/><polygon points="4,0 6,0 6,2 4,2" fill="#fff5eb"/><polygon points="0,4 2,4 2,6 0,6" fill="#fff5eb"/><polygon points="4,4 6,4 6,6 4,6" fill="#fff5eb"/><polygon points="2,0 4,0 3,1" fill="#fff5eb"/><polygon points="2,0 3,1 2.5,1.5 2,1" fill="#d0e030"/><polygon points="4,0 4,2 3,1" fill="#00ffff"/><polygon points="3,1 4,2 3,2" fill="#d0e030"/><polygon points="3,1 3,2 2.5,1.5" fill="#e6283c"/><polygon points="2,1 3,2 2,2" fill="#ff6496"/><polygon points="6,2 6,4 5,3" fill="#fff5eb"/><polygon points="4,2 6,2 4,4" fill="#d0e030"/><polygon points="5,3 6,4 4,4" fill="#00ffff"/><polygon points="2,6 3,5 4,6" fill="#fff5eb"/><polygon points="2,4 4,4 4,6" fill="#d0e030"/><polygon points="2,4 3,5 2,6" fill="#00ffff"/><polygon points="0,2 1,3 0,4" fill="#fff5eb"/><polygon points="0,2 1,2 1.5,2.5 1,3" fill="#00ffff"/><polygon points="0,4 1,3 2,3 2,4" fill="#d0e030"/><polygon points="1,2 2,2 1.5,2.5" fill="#e6283c"/><polygon points="2,2 2,3 1,3" fill="#ff6496"/><polygon points="2,2 3,2 3,3 2,3" fill="#e6283c"/><polygon points="3,2 4,2 3,3" fill="#ff6496"/><polygon points="4,2 4,3 3.5,2.5" fill="#00ffff"/><polygon points="3.5,2.5 4,3 3,3" fill="#e6283c"/><polygon points="2,3 3,3 3,4" fill="#ff6496"/><polygon points="2,3 2.5,3.5 2,4" fill="#e6283c"/><polygon points="2,4 2.5,3.5 3,4" fill="#00ffff"/><polygon points="3,3 4,3 4,4 3,4" fill="#00ffff"/></g></svg>
<svg x="180.3" y="318" width="112.3" height="112.3" viewBox="0 0 8 8" overflow="visible"><g stroke="#000" stroke-width="0.06411" stroke-linejoin="miter" stroke-miterlimit="2"><polygon points="0,0 8,0 8,8 0,8" fill="#ffe6b4"/><polygon points="0,0 1,0 1,1 0,1" fill="#660066"/><polygon points="1,0 2,0 2,1 1,1" fill="#fffacd"/><polygon points="0,1 1,1 1,2 0,2" fill="#fffacd"/><polygon points="1,1 2,1 2,2 1,2" fill="#660066"/><polygon points="2,2 3,2 3,3 2,3" fill="#660066"/><polygon points="2,0 3,1 3,2 2,2" fill="#e03060"/><polygon points="0,2 2,2 2,3 1,3" fill="#e03060"/><polygon points="2,0 4,0 3,1" fill="#ffe6b4"/><polygon points="4,0 6,0 5,1" fill="#ffe6b4"/><polygon points="4,0 5,1 4,2 3,1" fill="#f57206"/><polygon points="3,1 4,2 3,3" fill="#ffe6b4"/><polygon points="5,1 5,3 4,2" fill="#ffe6b4"/><polygon points="8,0 8,1 7,1 7,0" fill="#660066"/><polygon points="8,1 8,2 7,2 7,1" fill="#fffacd"/><polygon points="7,0 7,1 6,1 6,0" fill="#fffacd"/><polygon points="7,1 7,2 6,2 6,1" fill="#660066"/><polygon points="6,2 6,3 5,3 5,2" fill="#660066"/><polygon points="8,2 7,3 6,3 6,2" fill="#e03060"/><polygon points="6,0 6,2 5,2 5,1" fill="#e03060"/><polygon points="8,2 8,4 7,3" fill="#ffe6b4"/><polygon points="8,4 8,6 7,5" fill="#ffe6b4"/><polygon points="8,4 7,5 6,4 7,3" fill="#f57206"/><polygon points="7,3 6,4 5,3" fill="#ffe6b4"/><polygon points="7,5 5,5 6,4" fill="#ffe6b4"/><polygon points="8,8 7,8 7,7 8,7" fill="#660066"/><polygon points="7,8 6,8 6,7 7,7" fill="#fffacd"/><polygon points="8,7 7,7 7,6 8,6" fill="#fffacd"/><polygon points="7,7 6,7 6,6 7,6" fill="#660066"/><polygon points="6,6 5,6 5,5 6,5" fill="#660066"/><polygon points="6,8 5,7 5,6 6,6" fill="#e03060"/><polygon points="8,6 6,6 6,5 7,5" fill="#e03060"/><polygon points="6,8 4,8 5,7" fill="#ffe6b4"/><polygon points="4,8 2,8 3,7" fill="#ffe6b4"/><polygon points="4,8 3,7 4,6 5,7" fill="#f57206"/><polygon points="5,7 4,6 5,5" fill="#ffe6b4"/><polygon points="3,7 3,5 4,6" fill="#ffe6b4"/><polygon points="0,8 0,7 1,7 1,8" fill="#660066"/><polygon points="0,7 0,6 1,6 1,7" fill="#fffacd"/><polygon points="1,8 1,7 2,7 2,8" fill="#fffacd"/><polygon points="1,7 1,6 2,6 2,7" fill="#660066"/><polygon points="2,6 2,5 3,5 3,6" fill="#660066"/><polygon points="0,6 1,5 2,5 2,6" fill="#e03060"/><polygon points="2,8 2,6 3,6 3,7" fill="#e03060"/><polygon points="0,6 0,4 1,5" fill="#ffe6b4"/><polygon points="0,4 0,2 1,3" fill="#ffe6b4"/><polygon points="0,4 1,3 2,4 1,5" fill="#f57206"/><polygon points="1,5 2,4 3,5" fill="#ffe6b4"/><polygon points="1,3 3,3 2,4" fill="#ffe6b4"/><polygon points="4,2 6,4 4,6 2,4" fill="#660066"/></g></svg>
<svg x="48" y="440" width="112.4" height="112.4" viewBox="0 0 8 8" overflow="visible"><g stroke="#000" stroke-width="0.06406" stroke-linejoin="miter" stroke-miterlimit="2"><polygon points="0,0 8,0 8,8 0,8" fill="#ffffff"/><polygon points="0,0 1,0 1,1 0,1" fill="#f53c5a"/><polygon points="1,1 2,1 2,2 1,2" fill="#f53c5a"/><polygon points="2,2 3,2 3,3 2,3" fill="#f53c5a"/><polygon points="2,0 3,1 3,2 2,2" fill="#d2e132"/><polygon points="0,2 2,2 2,3 1,3" fill="#d2e132"/><polygon points="3,1 4,2 3,3" fill="#2d2d2d"/><polygon points="5,1 5,3 4,2" fill="#2d2d2d"/><polygon points="8,0 8,1 7,1 7,0" fill="#f53c5a"/><polygon points="7,1 7,2 6,2 6,1" fill="#f53c5a"/><polygon points="6,2 6,3 5,3 5,2" fill="#f53c5a"/><polygon points="8,2 7,3 6,3 6,2" fill="#d2e132"/><polygon points="6,0 6,2 5,2 5,1" fill="#d2e132"/><polygon points="7,3 6,4 5,3" fill="#2d2d2d"/><polygon points="7,5 5,5 6,4" fill="#2d2d2d"/><polygon points="8,8 7,8 7,7 8,7" fill="#f53c5a"/><polygon points="7,7 6,7 6,6 7,6" fill="#f53c5a"/><polygon points="6,6 5,6 5,5 6,5" fill="#f53c5a"/><polygon points="6,8 5,7 5,6 6,6" fill="#d2e132"/><polygon points="8,6 6,6 6,5 7,5" fill="#d2e132"/><polygon points="5,7 4,6 5,5" fill="#2d2d2d"/><polygon points="3,7 3,5 4,6" fill="#2d2d2d"/><polygon points="0,8 0,7 1,7 1,8" fill="#f53c5a"/><polygon points="1,7 1,6 2,6 2,7" fill="#f53c5a"/><polygon points="2,6 2,5 3,5 3,6" fill="#f53c5a"/><polygon points="0,6 1,5 2,5 2,6" fill="#d2e132"/><polygon points="2,8 2,6 3,6 3,7" fill="#d2e132"/><polygon points="1,5 2,4 3,5" fill="#2d2d2d"/><polygon points="1,3 3,3 2,4" fill="#2d2d2d"/><polygon points="3,3 5,3 5,5 3,5" fill="#f53c5a"/></g></svg>
<svg x="180" y="440" width="112.4" height="112.4" viewBox="0 0 8 8" overflow="visible"><g stroke="#000" stroke-width="0.06406" stroke-linejoin="miter" stroke-miterlimit="2"><polygon points="0,0 8,0 8,8 0,8" fill="#ffffff"/><polygon points="0,0 1,0 1,1 0,1" fill="#ffe619"/><polygon points="1,0 4,0 3,1 1,1" fill="#009999"/><polygon points="4,0 7,0 7,1 5,1" fill="#009999"/><polygon points="1,1 3,1 1,3" fill="#ffffff"/><polygon points="3,1 3,3 1,3" fill="#00cccc"/><polygon points="4,0 5,1 4,2 3,1" fill="#00cccc"/><polygon points="3,1 4,2 3,3" fill="#ffe619"/><polygon points="5,1 5,3 4,2" fill="#ffe619"/><polygon points="3,3 4,2 5,3" fill="#00cccc"/><polygon points="8,0 8,1 7,1 7,0" fill="#ffe619"/><polygon points="8,1 8,4 7,3 7,1" fill="#009999"/><polygon points="8,4 8,7 7,7 7,5" fill="#009999"/><polygon points="7,1 7,3 5,1" fill="#ffffff"/><polygon points="7,3 5,3 5,1" fill="#00cccc"/><polygon points="8,4 7,5 6,4 7,3" fill="#00cccc"/><polygon points="7,3 6,4 5,3" fill="#ffe619"/><polygon points="7,5 5,5 6,4" fill="#ffe619"/><polygon points="5,3 6,4 5,5" fill="#00cccc"/><polygon points="8,8 7,8 7,7 8,7" fill="#ffe619"/><polygon points="7,8 4,8 5,7 7,7" fill="#009999"/><polygon points="4,8 1,8 1,7 3,7" fill="#009999"/><polygon points="7,7 5,7 7,5" fill="#ffffff"/><polygon points="5,7 5,5 7,5" fill="#00cccc"/><polygon points="4,8 3,7 4,6 5,7" fill="#00cccc"/><polygon points="5,7 4,6 5,5" fill="#ffe619"/><polygon points="3,7 3,5 4,6" fill="#ffe619"/><polygon points="5,5 4,6 3,5" fill="#00cccc"/><polygon points="0,8 0,7 1,7 1,8" fill="#ffe619"/><polygon points="0,7 0,4 1,5 1,7" fill="#009999"/><polygon points="0,4 0,1 1,1 1,3" fill="#009999"/><polygon points="1,7 1,5 3,7" fill="#ffffff"/><polygon points="1,5 3,5 3,7" fill="#00cccc"/><polygon points="0,4 1,3 2,4 1,5" fill="#00cccc"/><polygon points="1,5 2,4 3,5" fill="#ffe619"/><polygon points="1,3 3,3 2,4" fill="#ffe619"/><polygon points="3,5 2,4 3,3" fill="#00cccc"/><polygon points="3,3 5,3 5,5 3,5" fill="#009999"/></g></svg>
<rect x="32.5" y="568.7" width="278" height="9.2" fill="#f3f3f3"/>
<rect x="42.5" y="572.7" width="11" height="1.1" fill="#555"/>
<rect x="33.2" y="580.2" width="12.6" height="13" fill="#f0f0f0" stroke="#b4b4b4" stroke-width="0.8"/>
<rect x="35.2" y="582.4" width="8.6" height="8.6" fill="#5a5a5a"/>
<rect x="48.2" y="580.2" width="12.6" height="13" fill="#bde0fa" stroke="#8fb4d0" stroke-width="0.8"/>
<rect x="51.5" y="583.7" width="6" height="6" fill="#5a5a5a"/>
<rect x="63.2" y="580.2" width="12.6" height="13" fill="#f0f0f0" stroke="#b4b4b4" stroke-width="0.8"/>
<rect x="67.3" y="584.5" width="4.4" height="4.4" fill="#5a5a5a"/>
<rect x="78.2" y="580.2" width="12.6" height="13" fill="#f0f0f0" stroke="#b4b4b4" stroke-width="0.8"/>
<rect x="83.6" y="585.8" width="1.8" height="1.8" fill="#5a5a5a"/>
<rect x="251.6" y="580.2" width="12.6" height="13" fill="#f0f0f0" stroke="#b4b4b4" stroke-width="0.8"/>
<path d="M255.1 582.9 v7.6 M260.5 582.9 l-4.2 3.8 l4.2 3.8 Z" fill="#4a4a4a" stroke="#4a4a4a" stroke-width="1.3"/>
<rect x="266.6" y="580.2" width="12.6" height="13" fill="#f0f0f0" stroke="#b4b4b4" stroke-width="0.8"/>
<path d="M274.9 582.9 l-4.2 3.8 l4.2 3.8 Z" fill="#4a4a4a"/>
<rect x="281.6" y="580.2" width="12.6" height="13" fill="#f0f0f0" stroke="#b4b4b4" stroke-width="0.8"/>
<path d="M285.9 582.9 l4.2 3.8 l-4.2 3.8 Z" fill="#4a4a4a"/>
<rect x="296.6" y="580.2" width="12.6" height="13" fill="#f0f0f0" stroke="#b4b4b4" stroke-width="0.8"/>
<path d="M305.7 582.9 v7.6 M300.3 582.9 l4.2 3.8 l-4.2 3.8 Z" fill="#4a4a4a" stroke="#4a4a4a" stroke-width="1.3"/>
<rect x="335" y="585" width="500" height="1.1" fill="#4a4a4a"/>
<rect x="835" y="586.2" width="362.5" height="10.8" fill="#f0f0f0"/>
<rect x="335.4" y="586.1" width="58.4" height="10.9" fill="#ffffff"/>
<path d="M393.8 585 V596.4 H450" fill="none" stroke="#3a3a3a" stroke-width="1"/>
<rect x="393.9" y="584.6" width="56" height="1.6" fill="#fff"/>
<rect x="450.4" y="586.1" width="112" height="10.4" fill="#c8c8c8"/>
<path d="M450.4 585.5 V596.5 M506.2 586 V596.5 M562.4 586 V596.5" stroke="#8a8a8a" stroke-width="0.9" fill="none"/>
<text x="399.4" y="594.6" font-size="9.8" font-weight="normal" fill="#111" text-anchor="start" font-family="Liberation Sans" textLength="30.5" lengthAdjust="spacingAndGlyphs">Layer 1</text>
<text x="455.6" y="594.6" font-size="9.8" font-weight="normal" fill="#111" text-anchor="start" font-family="Liberation Sans" textLength="30.5" lengthAdjust="spacingAndGlyphs">Layer 2</text>
<text x="511.8" y="594.6" font-size="9.8" font-weight="normal" fill="#111" text-anchor="start" font-family="Liberation Sans" textLength="30.5" lengthAdjust="spacingAndGlyphs">Layer 3</text>
<ellipse cx="439.6" cy="591.4" rx="3.4" ry="2.5" fill="#cfe6f8" stroke="#4a90d0" stroke-width="0.7"/><circle cx="439.6" cy="591.4" r="1.3" fill="#2a70c0"/>
<ellipse cx="495.8" cy="591.4" rx="3.4" ry="2.5" fill="#cfe6f8" stroke="#4a90d0" stroke-width="0.7"/><circle cx="495.8" cy="591.4" r="1.3" fill="#2a70c0"/>
<ellipse cx="552" cy="591.4" rx="3.4" ry="2.5" fill="#cfe6f8" stroke="#4a90d0" stroke-width="0.7"/><circle cx="552" cy="591.4" r="1.3" fill="#2a70c0"/>
<rect x="1186.6" y="66.3" width="10.7" height="520" fill="#f0f0f0"/>
<rect x="1191" y="326" width="1" height="9" fill="#7a7a7a"/>
<rect x="361" y="72.7" width="505.5" height="505" fill="#1b1b1b"/>
<rect x="361" y="72.7" width="505.5" height="505" fill="#fff" filter="url(#noiseB)" opacity="0.09"/>
<rect x="397" y="108.8" width="433.8" height="433.8" fill="#f3f3f3"/>
<rect x="397" y="108.8" width="433.8" height="433.8" fill="url(#wb)"/>
<rect x="406.1" y="118" width="415" height="415.4" fill="#184a4e"/>
<rect x="406.1" y="118" width="415" height="415.4" fill="url(#dots)"/>
<rect x="406.3" y="118" width="18.1" height="18.1" fill="#53aa9f"/>
<rect x="406.3" y="118" width="18.1" height="18.1" fill="url(#dots2)"/>
<rect x="406.3" y="217.25" width="18.1" height="18.1" fill="#53aa9f"/>
<rect x="406.3" y="217.25" width="18.1" height="18.1" fill="url(#dots2)"/>
<rect x="406.3" y="316.5" width="18.1" height="18.1" fill="#53aa9f"/>
<rect x="406.3" y="316.5" width="18.1" height="18.1" fill="url(#dots2)"/>
<rect x="406.3" y="415.75" width="18.1" height="18.1" fill="#53aa9f"/>
<rect x="406.3" y="415.75" width="18.1" height="18.1" fill="url(#dots2)"/>
<rect x="406.3" y="515" width="18.1" height="18.1" fill="#53aa9f"/>
<rect x="406.3" y="515" width="18.1" height="18.1" fill="url(#dots2)"/>
<rect x="505.55" y="118" width="18.1" height="18.1" fill="#53aa9f"/>
<rect x="505.55" y="118" width="18.1" height="18.1" fill="url(#dots2)"/>
<rect x="505.55" y="217.25" width="18.1" height="18.1" fill="#53aa9f"/>
<rect x="505.55" y="217.25" width="18.1" height="18.1" fill="url(#dots2)"/>
<rect x="505.55" y="316.5" width="18.1" height="18.1" fill="#53aa9f"/>
<rect x="505.55" y="316.5" width="18.1" height="18.1" fill="url(#dots2)"/>
<rect x="505.55" y="415.75" width="18.1" height="18.1" fill="#53aa9f"/>
<rect x="505.55" y="415.75" width="18.1" height="18.1" fill="url(#dots2)"/>
<rect x="505.55" y="515" width="18.1" height="18.1" fill="#53aa9f"/>
<rect x="505.55" y="515" width="18.1" height="18.1" fill="url(#dots2)"/>
<rect x="604.8" y="118" width="18.1" height="18.1" fill="#53aa9f"/>
<rect x="604.8" y="118" width="18.1" height="18.1" fill="url(#dots2)"/>
<rect x="604.8" y="217.25" width="18.1" height="18.1" fill="#53aa9f"/>
<rect x="604.8" y="217.25" width="18.1" height="18.1" fill="url(#dots2)"/>
<rect x="604.8" y="316.5" width="18.1" height="18.1" fill="#53aa9f"/>
<rect x="604.8" y="316.5" width="18.1" height="18.1" fill="url(#dots2)"/>
<rect x="604.8" y="415.75" width="18.1" height="18.1" fill="#53aa9f"/>
<rect x="604.8" y="415.75" width="18.1" height="18.1" fill="url(#dots2)"/>
<rect x="604.8" y="515" width="18.1" height="18.1" fill="#53aa9f"/>
<rect x="604.8" y="515" width="18.1" height="18.1" fill="url(#dots2)"/>
<rect x="704.05" y="118" width="18.1" height="18.1" fill="#53aa9f"/>
<rect x="704.05" y="118" width="18.1" height="18.1" fill="url(#dots2)"/>
<rect x="704.05" y="217.25" width="18.1" height="18.1" fill="#53aa9f"/>
<rect x="704.05" y="217.25" width="18.1" height="18.1" fill="url(#dots2)"/>
<rect x="704.05" y="316.5" width="18.1" height="18.1" fill="#53aa9f"/>
<rect x="704.05" y="316.5" width="18.1" height="18.1" fill="url(#dots2)"/>
<rect x="704.05" y="415.75" width="18.1" height="18.1" fill="#53aa9f"/>
<rect x="704.05" y="415.75" width="18.1" height="18.1" fill="url(#dots2)"/>
<rect x="704.05" y="515" width="18.1" height="18.1" fill="#53aa9f"/>
<rect x="704.05" y="515" width="18.1" height="18.1" fill="url(#dots2)"/>
<rect x="803.3" y="118" width="18.1" height="18.1" fill="#53aa9f"/>
<rect x="803.3" y="118" width="18.1" height="18.1" fill="url(#dots2)"/>
<rect x="803.3" y="217.25" width="18.1" height="18.1" fill="#53aa9f"/>
<rect x="803.3" y="217.25" width="18.1" height="18.1" fill="url(#dots2)"/>
<rect x="803.3" y="316.5" width="18.1" height="18.1" fill="#53aa9f"/>
<rect x="803.3" y="316.5" width="18.1" height="18.1" fill="url(#dots2)"/>
<rect x="803.3" y="415.75" width="18.1" height="18.1" fill="#53aa9f"/>
<rect x="803.3" y="415.75" width="18.1" height="18.1" fill="url(#dots2)"/>
<rect x="803.3" y="515" width="18.1" height="18.1" fill="#53aa9f"/>
<rect x="803.3" y="515" width="18.1" height="18.1" fill="url(#dots2)"/>
<symbol id="qa" viewBox="0 0 6 6"><polygon points="0,0 1,0 1,1 0,1" fill="#f8841e" stroke="#f8841e" stroke-width="0.035"/><polygon points="1,0 2,1 2,2 1,2 0,1 1,1" fill="#d63a8a" stroke="#d63a8a" stroke-width="0.035"/><polygon points="2,0 3,1 2,2" fill="#ecb93e" stroke="#ecb93e" stroke-width="0.035"/><polygon points="4,0 4,2 3,1" fill="#ecb93e" stroke="#ecb93e" stroke-width="0.035"/><polygon points="2,2 3,1 4,2" fill="#f8841e" stroke="#f8841e" stroke-width="0.035"/><polygon points="6,0 6,1 5,1 5,0" fill="#f8841e" stroke="#f8841e" stroke-width="0.035"/><polygon points="6,1 5,2 4,2 4,1 5,0 5,1" fill="#d63a8a" stroke="#d63a8a" stroke-width="0.035"/><polygon points="6,2 5,3 4,2" fill="#ecb93e" stroke="#ecb93e" stroke-width="0.035"/><polygon points="6,4 4,4 5,3" fill="#ecb93e" stroke="#ecb93e" stroke-width="0.035"/><polygon points="4,2 5,3 4,4" fill="#f8841e" stroke="#f8841e" stroke-width="0.035"/><polygon points="6,6 5,6 5,5 6,5" fill="#f8841e" stroke="#f8841e" stroke-width="0.035"/><polygon points="5,6 4,5 4,4 5,4 6,5 5,5" fill="#d63a8a" stroke="#d63a8a" stroke-width="0.035"/><polygon points="4,6 3,5 4,4" fill="#ecb93e" stroke="#ecb93e" stroke-width="0.035"/><polygon points="2,6 2,4 3,5" fill="#ecb93e" stroke="#ecb93e" stroke-width="0.035"/><polygon points="4,4 3,5 2,4" fill="#f8841e" stroke="#f8841e" stroke-width="0.035"/><polygon points="0,6 0,5 1,5 1,6" fill="#f8841e" stroke="#f8841e" stroke-width="0.035"/><polygon points="0,5 1,4 2,4 2,5 1,6 1,5" fill="#d63a8a" stroke="#d63a8a" stroke-width="0.035"/><polygon points="0,4 1,3 2,4" fill="#ecb93e" stroke="#ecb93e" stroke-width="0.035"/><polygon points="0,2 2,2 1,3" fill="#ecb93e" stroke="#ecb93e" stroke-width="0.035"/><polygon points="2,4 1,3 2,2" fill="#f8841e" stroke="#f8841e" stroke-width="0.035"/><polygon points="2,2 4,2 4,4 2,4" fill="#eef0f3" stroke="#eef0f3" stroke-width="0.035"/><polygon points="3,2 4,3 3,4 2,3" fill="#fbb866" stroke="#fbb866" stroke-width="0.035"/></symbol>
<symbol id="qb" viewBox="0 0 6 6"><polygon points="0,0 1,0 1,1 0,1" fill="#fccc58" stroke="#fccc58" stroke-width="0.035"/><polygon points="1,0 2,1 2,2 1,2 0,1 1,1" fill="#42a59c" stroke="#42a59c" stroke-width="0.035"/><polygon points="2,0 3,1 2,2" fill="#ea4560" stroke="#ea4560" stroke-width="0.035"/><polygon points="4,0 4,2 3,1" fill="#ea4560" stroke="#ea4560" stroke-width="0.035"/><polygon points="2,2 3,1 4,2" fill="#fdd062" stroke="#fdd062" stroke-width="0.035"/><polygon points="6,0 6,1 5,1 5,0" fill="#fccc58" stroke="#fccc58" stroke-width="0.035"/><polygon points="6,1 5,2 4,2 4,1 5,0 5,1" fill="#42a59c" stroke="#42a59c" stroke-width="0.035"/><polygon points="6,2 5,3 4,2" fill="#ea4560" stroke="#ea4560" stroke-width="0.035"/><polygon points="6,4 4,4 5,3" fill="#ea4560" stroke="#ea4560" stroke-width="0.035"/><polygon points="4,2 5,3 4,4" fill="#fdd062" stroke="#fdd062" stroke-width="0.035"/><polygon points="6,6 5,6 5,5 6,5" fill="#fccc58" stroke="#fccc58" stroke-width="0.035"/><polygon points="5,6 4,5 4,4 5,4 6,5 5,5" fill="#42a59c" stroke="#42a59c" stroke-width="0.035"/><polygon points="4,6 3,5 4,4" fill="#ea4560" stroke="#ea4560" stroke-width="0.035"/><polygon points="2,6 2,4 3,5" fill="#ea4560" stroke="#ea4560" stroke-width="0.035"/><polygon points="4,4 3,5 2,4" fill="#fdd062" stroke="#fdd062" stroke-width="0.035"/><polygon points="0,6 0,5 1,5 1,6" fill="#fccc58" stroke="#fccc58" stroke-width="0.035"/><polygon points="0,5 1,4 2,4 2,5 1,6 1,5" fill="#42a59c" stroke="#42a59c" stroke-width="0.035"/><polygon points="0,4 1,3 2,4" fill="#ea4560" stroke="#ea4560" stroke-width="0.035"/><polygon points="0,2 2,2 1,3" fill="#ea4560" stroke="#ea4560" stroke-width="0.035"/><polygon points="2,4 1,3 2,2" fill="#fdd062" stroke="#fdd062" stroke-width="0.035"/><polygon points="2,2 4,2 4,4 2,4" fill="#f2f2f2" stroke="#f2f2f2" stroke-width="0.035"/><polygon points="3,2 4,3 3,4 2,3" fill="#1c1c1c" stroke="#1c1c1c" stroke-width="0.035"/></symbol>
<rect x="424.4" y="136.1" width="81.15" height="81.15" fill="#332d2b"/>
<rect x="424.4" y="136.1" width="81.15" height="81.15" fill="url(#spk)" opacity="0.6"/>
<use href="#qa" x="424.4" y="136.1" width="81.15" height="81.15"/>
<rect x="424.4" y="235.35" width="81.15" height="81.15" fill="#272525"/>
<rect x="424.4" y="235.35" width="81.15" height="81.15" fill="url(#spk)" opacity="0.6"/>
<use href="#qb" x="424.4" y="235.35" width="81.15" height="81.15"/>
<rect x="424.4" y="334.6" width="81.15" height="81.15" fill="#332d2b"/>
<rect x="424.4" y="334.6" width="81.15" height="81.15" fill="url(#spk)" opacity="0.6"/>
<use href="#qa" x="424.4" y="334.6" width="81.15" height="81.15"/>
<rect x="424.4" y="433.85" width="81.15" height="81.15" fill="#272525"/>
<rect x="424.4" y="433.85" width="81.15" height="81.15" fill="url(#spk)" opacity="0.6"/>
<use href="#qb" x="424.4" y="433.85" width="81.15" height="81.15"/>
<rect x="523.65" y="136.1" width="81.15" height="81.15" fill="#272525"/>
<rect x="523.65" y="136.1" width="81.15" height="81.15" fill="url(#spk)" opacity="0.6"/>
<use href="#qb" x="523.65" y="136.1" width="81.15" height="81.15"/>
<rect x="523.65" y="235.35" width="81.15" height="81.15" fill="#332d2b"/>
<rect x="523.65" y="235.35" width="81.15" height="81.15" fill="url(#spk)" opacity="0.6"/>
<use href="#qa" x="523.65" y="235.35" width="81.15" height="81.15"/>
<rect x="523.65" y="334.6" width="81.15" height="81.15" fill="#272525"/>
<rect x="523.65" y="334.6" width="81.15" height="81.15" fill="url(#spk)" opacity="0.6"/>
<use href="#qb" x="523.65" y="334.6" width="81.15" height="81.15"/>
<rect x="523.65" y="433.85" width="81.15" height="81.15" fill="#332d2b"/>
<rect x="523.65" y="433.85" width="81.15" height="81.15" fill="url(#spk)" opacity="0.6"/>
<use href="#qa" x="523.65" y="433.85" width="81.15" height="81.15"/>
<rect x="622.9" y="136.1" width="81.15" height="81.15" fill="#332d2b"/>
<rect x="622.9" y="136.1" width="81.15" height="81.15" fill="url(#spk)" opacity="0.6"/>
<use href="#qa" x="622.9" y="136.1" width="81.15" height="81.15"/>
<rect x="622.9" y="235.35" width="81.15" height="81.15" fill="#272525"/>
<rect x="622.9" y="235.35" width="81.15" height="81.15" fill="url(#spk)" opacity="0.6"/>
<use href="#qb" x="622.9" y="235.35" width="81.15" height="81.15"/>
<rect x="622.9" y="334.6" width="81.15" height="81.15" fill="#332d2b"/>
<rect x="622.9" y="334.6" width="81.15" height="81.15" fill="url(#spk)" opacity="0.6"/>
<use href="#qa" x="622.9" y="334.6" width="81.15" height="81.15"/>
<rect x="622.9" y="433.85" width="81.15" height="81.15" fill="#272525"/>
<rect x="622.9" y="433.85" width="81.15" height="81.15" fill="url(#spk)" opacity="0.6"/>
<use href="#qb" x="622.9" y="433.85" width="81.15" height="81.15"/>
<rect x="722.15" y="136.1" width="81.15" height="81.15" fill="#272525"/>
<rect x="722.15" y="136.1" width="81.15" height="81.15" fill="url(#spk)" opacity="0.6"/>
<use href="#qb" x="722.15" y="136.1" width="81.15" height="81.15"/>
<rect x="722.15" y="235.35" width="81.15" height="81.15" fill="#332d2b"/>
<rect x="722.15" y="235.35" width="81.15" height="81.15" fill="url(#spk)" opacity="0.6"/>
<use href="#qa" x="722.15" y="235.35" width="81.15" height="81.15"/>
<rect x="722.15" y="334.6" width="81.15" height="81.15" fill="#272525"/>
<rect x="722.15" y="334.6" width="81.15" height="81.15" fill="url(#spk)" opacity="0.6"/>
<use href="#qb" x="722.15" y="334.6" width="81.15" height="81.15"/>
<rect x="722.15" y="433.85" width="81.15" height="81.15" fill="#332d2b"/>
<rect x="722.15" y="433.85" width="81.15" height="81.15" fill="url(#spk)" opacity="0.6"/>
<use href="#qa" x="722.15" y="433.85" width="81.15" height="81.15"/>
<circle cx="1076.6" cy="478.3" r="187.6" fill="#046ca8"/>
<rect x="958" y="353.4" width="212" height="236.4" fill="#ffffff"/>
<rect x="958" y="353.4" width="212" height="46.3" fill="#c4166e"/>
<g fill="#fff" stroke="#fff" stroke-width="0.45" font-family="Liberation Serif"><text x="961.6" y="385.4" textLength="92.2" lengthAdjust="spacingAndGlyphs"><tspan font-size="36">O</tspan><tspan font-size="32">HIO</tspan></text><text x="1068.2" y="385.4" textLength="93.4" lengthAdjust="spacingAndGlyphs"><tspan font-size="36">S</tspan><tspan font-size="32">TARS</tspan></text></g>
<text x="1161" y="397" font-size="10" font-weight="normal" fill="#fff" text-anchor="end" font-family="Liberation Sans" textLength="50" lengthAdjust="spacingAndGlyphs">16 designs</text>
<svg x="961.3" y="413" width="45.5" height="45.5" viewBox="0 0 8 8" overflow="visible"><g stroke="#7a3a3a" stroke-width="0.0967" stroke-linejoin="miter" stroke-miterlimit="2"><polygon points="0,0 8,0 8,8 0,8" fill="#f86c6c"/><polygon points="0,0 2,0 2,2 0,2" fill="#f86c6c"/><polygon points="2,2 3,2 3,3 2,3" fill="#1496c0"/><polygon points="2,0 3,1 3,2 2,2" fill="#18ccd0"/><polygon points="0,2 2,2 2,3 1,3" fill="#18ccd0"/><polygon points="2,0 4,0 3,1" fill="#f86c6c"/><polygon points="4,0 6,0 5,1" fill="#f86c6c"/><polygon points="4,0 5,1 4,2 3,1" fill="#1496c0"/><polygon points="3,1 4,2 3,3" fill="#d8e83a"/><polygon points="5,1 5,3 4,2" fill="#d8e83a"/><polygon points="8,0 8,2 6,2 6,0" fill="#f86c6c"/><polygon points="6,2 6,3 5,3 5,2" fill="#1496c0"/><polygon points="8,2 7,3 6,3 6,2" fill="#18ccd0"/><polygon points="6,0 6,2 5,2 5,1" fill="#18ccd0"/><polygon points="8,2 8,4 7,3" fill="#f86c6c"/><polygon points="8,4 8,6 7,5" fill="#f86c6c"/><polygon points="8,4 7,5 6,4 7,3" fill="#1496c0"/><polygon points="7,3 6,4 5,3" fill="#d8e83a"/><polygon points="7,5 5,5 6,4" fill="#d8e83a"/><polygon points="8,8 6,8 6,6 8,6" fill="#f86c6c"/><polygon points="6,6 5,6 5,5 6,5" fill="#1496c0"/><polygon points="6,8 5,7 5,6 6,6" fill="#18ccd0"/><polygon points="8,6 6,6 6,5 7,5" fill="#18ccd0"/><polygon points="6,8 4,8 5,7" fill="#f86c6c"/><polygon points="4,8 2,8 3,7" fill="#f86c6c"/><polygon points="4,8 3,7 4,6 5,7" fill="#1496c0"/><polygon points="5,7 4,6 5,5" fill="#d8e83a"/><polygon points="3,7 3,5 4,6" fill="#d8e83a"/><polygon points="0,8 0,6 2,6 2,8" fill="#f86c6c"/><polygon points="2,6 2,5 3,5 3,6" fill="#1496c0"/><polygon points="0,6 1,5 2,5 2,6" fill="#18ccd0"/><polygon points="2,8 2,6 3,6 3,7" fill="#18ccd0"/><polygon points="0,6 0,4 1,5" fill="#f86c6c"/><polygon points="0,4 0,2 1,3" fill="#f86c6c"/><polygon points="0,4 1,3 2,4 1,5" fill="#1496c0"/><polygon points="1,5 2,4 3,5" fill="#d8e83a"/><polygon points="1,3 3,3 2,4" fill="#d8e83a"/><polygon points="4,2 6,4 4,6 2,4" fill="#18ccd0"/></g></svg>
<svg x="1013.4" y="413" width="45.5" height="45.5" viewBox="0 0 8 8" overflow="visible"><g stroke="#4a2a5a" stroke-width="0.0967" stroke-linejoin="miter" stroke-miterlimit="2"><polygon points="0,0 8,0 8,8 0,8" fill="#a468ae"/><polygon points="0,0 2,0 2,2 0,2" fill="#a468ae"/><polygon points="2,2 3,2 3,3 2,3" fill="#ffc814"/><polygon points="2,0 3,1 3,2 2,2" fill="#ffffd4"/><polygon points="0,2 2,2 2,3 1,3" fill="#ffffd4"/><polygon points="2,0 4,0 3,1" fill="#a468ae"/><polygon points="4,0 6,0 5,1" fill="#a468ae"/><polygon points="4,0 5,1 4,2 3,1" fill="#a468ae"/><polygon points="3,1 4,2 3,3" fill="#640078"/><polygon points="5,1 5,3 4,2" fill="#640078"/><polygon points="8,0 8,2 6,2 6,0" fill="#a468ae"/><polygon points="6,2 6,3 5,3 5,2" fill="#ffc814"/><polygon points="8,2 7,3 6,3 6,2" fill="#ffffd4"/><polygon points="6,0 6,2 5,2 5,1" fill="#ffffd4"/><polygon points="8,2 8,4 7,3" fill="#a468ae"/><polygon points="8,4 8,6 7,5" fill="#a468ae"/><polygon points="8,4 7,5 6,4 7,3" fill="#a468ae"/><polygon points="7,3 6,4 5,3" fill="#640078"/><polygon points="7,5 5,5 6,4" fill="#640078"/><polygon points="8,8 6,8 6,6 8,6" fill="#a468ae"/><polygon points="6,6 5,6 5,5 6,5" fill="#ffc814"/><polygon points="6,8 5,7 5,6 6,6" fill="#ffffd4"/><polygon points="8,6 6,6 6,5 7,5" fill="#ffffd4"/><polygon points="6,8 4,8 5,7" fill="#a468ae"/><polygon points="4,8 2,8 3,7" fill="#a468ae"/><polygon points="4,8 3,7 4,6 5,7" fill="#a468ae"/><polygon points="5,7 4,6 5,5" fill="#640078"/><polygon points="3,7 3,5 4,6" fill="#640078"/><polygon points="0,8 0,6 2,6 2,8" fill="#a468ae"/><polygon points="2,6 2,5 3,5 3,6" fill="#ffc814"/><polygon points="0,6 1,5 2,5 2,6" fill="#ffffd4"/><polygon points="2,8 2,6 3,6 3,7" fill="#ffffd4"/><polygon points="0,6 0,4 1,5" fill="#a468ae"/><polygon points="0,4 0,2 1,3" fill="#a468ae"/><polygon points="0,4 1,3 2,4 1,5" fill="#a468ae"/><polygon points="1,5 2,4 3,5" fill="#640078"/><polygon points="1,3 3,3 2,4" fill="#640078"/><polygon points="4,2 6,4 4,6 2,4" fill="#ffc814"/></g></svg>
<svg x="961.3" y="464.6" width="45.5" height="45.5" viewBox="0 0 6 6" overflow="visible"><g stroke="#6a4a3a" stroke-width="0.07253" stroke-linejoin="miter" stroke-miterlimit="2"><polygon points="0,0 6,0 6,6 0,6" fill="#fff5eb"/><polygon points="0,0 2,0 2,2 0,2" fill="#fff5eb"/><polygon points="4,0 6,0 6,2 4,2" fill="#fff5eb"/><polygon points="0,4 2,4 2,6 0,6" fill="#fff5eb"/><polygon points="4,4 6,4 6,6 4,6" fill="#fff5eb"/><polygon points="2,0 4,0 3,1" fill="#fff5eb"/><polygon points="2,0 3,1 2.5,1.5 2,1" fill="#cc1490"/><polygon points="4,0 4,2 3,1" fill="#ff7272"/><polygon points="3,1 4,2 3,2" fill="#cc1490"/><polygon points="3,1 3,2 2.5,1.5" fill="#ffd000"/><polygon points="2,1 3,2 2,2" fill="#ffdc14"/><polygon points="6,2 6,4 5,3" fill="#fff5eb"/><polygon points="4,2 6,2 4,4" fill="#cc1490"/><polygon points="5,3 6,4 4,4" fill="#ff7272"/><polygon points="2,6 3,5 4,6" fill="#fff5eb"/><polygon points="2,4 4,4 4,6" fill="#cc1490"/><polygon points="2,4 3,5 2,6" fill="#ff7272"/><polygon points="0,2 1,3 0,4" fill="#fff5eb"/><polygon points="0,2 1,2 1.5,2.5 1,3" fill="#ff7272"/><polygon points="0,4 1,3 2,3 2,4" fill="#cc1490"/><polygon points="1,2 2,2 1.5,2.5" fill="#ffd000"/><polygon points="2,2 2,3 1,3" fill="#ffdc14"/><polygon points="2,2 3,2 3,3 2,3" fill="#ffd000"/><polygon points="3,2 4,2 3,3" fill="#ffdc14"/><polygon points="4,2 4,3 3.5,2.5" fill="#ff7272"/><polygon points="3.5,2.5 4,3 3,3" fill="#ffd000"/><polygon points="2,3 3,3 3,4" fill="#ffdc14"/><polygon points="2,3 2.5,3.5 2,4" fill="#ffd000"/><polygon points="2,4 2.5,3.5 3,4" fill="#ff7272"/><polygon points="3,3 4,3 4,4 3,4" fill="#ff7272"/></g></svg>
<svg x="1013.4" y="464.6" width="45.5" height="45.5" viewBox="0 0 8 8" overflow="visible"><g stroke="#2a6a7a" stroke-width="0.0967" stroke-linejoin="miter" stroke-miterlimit="2"><polygon points="0,0 8,0 8,8 0,8" fill="#62d2d4"/><polygon points="2,0 3,1 1,1" fill="#ffffff"/><polygon points="0,2 1,1 1,3" fill="#ffffff"/><polygon points="1,1 3,1 3,3 1,3" fill="#ff9a0a"/><polygon points="1.55,1.55 3,1.55 3,3 1.55,3" fill="#ffffa0"/><polygon points="4,0 5,1 4,2 3,1" fill="#ffffa0"/><polygon points="3,1 4,2 3,3" fill="#0a82b4"/><polygon points="5,1 5,3 4,2" fill="#0a82b4"/><polygon points="8,2 7,3 7,1" fill="#ffffff"/><polygon points="6,0 7,1 5,1" fill="#ffffff"/><polygon points="7,1 7,3 5,3 5,1" fill="#ff9a0a"/><polygon points="6.45,1.55 6.45,3 5,3 5,1.55" fill="#ffffa0"/><polygon points="8,4 7,5 6,4 7,3" fill="#ffffa0"/><polygon points="7,3 6,4 5,3" fill="#0a82b4"/><polygon points="7,5 5,5 6,4" fill="#0a82b4"/><polygon points="6,8 5,7 7,7" fill="#ffffff"/><polygon points="8,6 7,7 7,5" fill="#ffffff"/><polygon points="7,7 5,7 5,5 7,5" fill="#ff9a0a"/><polygon points="6.45,6.45 5,6.45 5,5 6.45,5" fill="#ffffa0"/><polygon points="4,8 3,7 4,6 5,7" fill="#ffffa0"/><polygon points="5,7 4,6 5,5" fill="#0a82b4"/><polygon points="3,7 3,5 4,6" fill="#0a82b4"/><polygon points="0,6 1,5 1,7" fill="#ffffff"/><polygon points="2,8 1,7 3,7" fill="#ffffff"/><polygon points="1,7 1,5 3,5 3,7" fill="#ff9a0a"/><polygon points="1.55,6.45 1.55,5 3,5 3,6.45" fill="#ffffa0"/><polygon points="0,4 1,3 2,4 1,5" fill="#ffffa0"/><polygon points="1,5 2,4 3,5" fill="#0a82b4"/><polygon points="1,3 3,3 2,4" fill="#0a82b4"/><polygon points="4,2 6,4 4,6 2,4" fill="#ff9a0a"/></g></svg>
<svg x="1063" y="513.2" width="45.5" height="45.5" viewBox="0 0 8 8" overflow="visible"><g stroke="#222" stroke-width="0.0967" stroke-linejoin="miter" stroke-miterlimit="2"><polygon points="0,0 8,0 8,8 0,8" fill="#ffe6b4"/><polygon points="0,0 1,0 1,1 0,1" fill="#660066"/><polygon points="1,0 2,0 2,1 1,1" fill="#fffacd"/><polygon points="0,1 1,1 1,2 0,2" fill="#fffacd"/><polygon points="1,1 2,1 2,2 1,2" fill="#660066"/><polygon points="2,2 3,2 3,3 2,3" fill="#660066"/><polygon points="2,0 3,1 3,2 2,2" fill="#e03060"/><polygon points="0,2 2,2 2,3 1,3" fill="#e03060"/><polygon points="2,0 4,0 3,1" fill="#ffe6b4"/><polygon points="4,0 6,0 5,1" fill="#ffe6b4"/><polygon points="4,0 5,1 4,2 3,1" fill="#f57206"/><polygon points="3,1 4,2 3,3" fill="#ffe6b4"/><polygon points="5,1 5,3 4,2" fill="#ffe6b4"/><polygon points="8,0 8,1 7,1 7,0" fill="#660066"/><polygon points="8,1 8,2 7,2 7,1" fill="#fffacd"/><polygon points="7,0 7,1 6,1 6,0" fill="#fffacd"/><polygon points="7,1 7,2 6,2 6,1" fill="#660066"/><polygon points="6,2 6,3 5,3 5,2" fill="#660066"/><polygon points="8,2 7,3 6,3 6,2" fill="#e03060"/><polygon points="6,0 6,2 5,2 5,1" fill="#e03060"/><polygon points="8,2 8,4 7,3" fill="#ffe6b4"/><polygon points="8,4 8,6 7,5" fill="#ffe6b4"/><polygon points="8,4 7,5 6,4 7,3" fill="#f57206"/><polygon points="7,3 6,4 5,3" fill="#ffe6b4"/><polygon points="7,5 5,5 6,4" fill="#ffe6b4"/><polygon points="8,8 7,8 7,7 8,7" fill="#660066"/><polygon points="7,8 6,8 6,7 7,7" fill="#fffacd"/><polygon points="8,7 7,7 7,6 8,6" fill="#fffacd"/><polygon points="7,7 6,7 6,6 7,6" fill="#660066"/><polygon points="6,6 5,6 5,5 6,5" fill="#660066"/><polygon points="6,8 5,7 5,6 6,6" fill="#e03060"/><polygon points="8,6 6,6 6,5 7,5" fill="#e03060"/><polygon points="6,8 4,8 5,7" fill="#ffe6b4"/><polygon points="4,8 2,8 3,7" fill="#ffe6b4"/><polygon points="4,8 3,7 4,6 5,7" fill="#f57206"/><polygon points="5,7 4,6 5,5" fill="#ffe6b4"/><polygon points="3,7 3,5 4,6" fill="#ffe6b4"/><polygon points="0,8 0,7 1,7 1,8" fill="#660066"/><polygon points="0,7 0,6 1,6 1,7" fill="#fffacd"/><polygon points="1,8 1,7 2,7 2,8" fill="#fffacd"/><polygon points="1,7 1,6 2,6 2,7" fill="#660066"/><polygon points="2,6 2,5 3,5 3,6" fill="#660066"/><polygon points="0,6 1,5 2,5 2,6" fill="#e03060"/><polygon points="2,8 2,6 3,6 3,7" fill="#e03060"/><polygon points="0,6 0,4 1,5" fill="#ffe6b4"/><polygon points="0,4 0,2 1,3" fill="#ffe6b4"/><polygon points="0,4 1,3 2,4 1,5" fill="#f57206"/><polygon points="1,5 2,4 3,5" fill="#ffe6b4"/><polygon points="1,3 3,3 2,4" fill="#ffe6b4"/><polygon points="4,2 6,4 4,6 2,4" fill="#660066"/></g></svg>
<svg x="1115" y="513.2" width="45.5" height="45.5" viewBox="0 0 6 6" overflow="visible"><g stroke="#222" stroke-width="0.07253" stroke-linejoin="miter" stroke-miterlimit="2"><polygon points="0,0 6,0 6,6 0,6" fill="#fff5eb"/><polygon points="0,0 1,0 1,1 0,1" fill="#fff5eb"/><polygon points="2,0 3,0 3,1 2,1" fill="#fff5eb"/><polygon points="4,0 5,0 5,1 4,1" fill="#fff5eb"/><polygon points="0,2 1,2 1,3 0,3" fill="#fff5eb"/><polygon points="2,2 3,2 3,3 2,3" fill="#fff5eb"/><polygon points="0,4 1,4 1,5 0,5" fill="#fff5eb"/><polygon points="1,1 2,1 2,2 1,2" fill="#fdea14"/><polygon points="3,1 4,1 4,2 3,2" fill="#fdea14"/><polygon points="1,3 2,3 2,4 1,4" fill="#fdea14"/><polygon points="1,0 2,0 1.5,0.5" fill="#fff5eb"/><polygon points="2,0 2,1 1.5,0.5" fill="#ff9900"/><polygon points="2,1 1,1 1.5,0.5" fill="#fdea14"/><polygon points="1,1 1,0 1.5,0.5" fill="#ff9900"/><polygon points="3,0 4,0 3.5,0.5" fill="#fff5eb"/><polygon points="4,0 4,1 3.5,0.5" fill="#ff9900"/><polygon points="4,1 3,1 3.5,0.5" fill="#fdea14"/><polygon points="3,1 3,0 3.5,0.5" fill="#ff9900"/><polygon points="0,1 1,1 0.5,1.5" fill="#ff9900"/><polygon points="1,1 1,2 0.5,1.5" fill="#fdea14"/><polygon points="1,2 0,2 0.5,1.5" fill="#ff9900"/><polygon points="0,2 0,1 0.5,1.5" fill="#fff5eb"/><polygon points="2,1 3,1 2.5,1.5" fill="#ff9900"/><polygon points="3,1 3,2 2.5,1.5" fill="#fdea14"/><polygon points="3,2 2,2 2.5,1.5" fill="#ff9900"/><polygon points="2,2 2,1 2.5,1.5" fill="#fdea14"/><polygon points="4,1 5,1 4.5,1.5" fill="#ff9900"/><polygon points="5,1 5,2 4.5,1.5" fill="#fff5eb"/><polygon points="5,2 4,2 4.5,1.5" fill="#ff9900"/><polygon points="4,2 4,1 4.5,1.5" fill="#fdea14"/><polygon points="1,2 2,2 1.5,2.5" fill="#fdea14"/><polygon points="2,2 2,3 1.5,2.5" fill="#ff9900"/><polygon points="2,3 1,3 1.5,2.5" fill="#fdea14"/><polygon points="1,3 1,2 1.5,2.5" fill="#ff9900"/><polygon points="3,2 4,2 3.5,2.5" fill="#fdea14"/><polygon points="4,2 4,3 3.5,2.5" fill="#ff9900"/><polygon points="4,3 3,3 3.5,2.5" fill="#fff5eb"/><polygon points="3,3 3,2 3.5,2.5" fill="#ff9900"/><polygon points="0,3 1,3 0.5,3.5" fill="#ff9900"/><polygon points="1,3 1,4 0.5,3.5" fill="#fdea14"/><polygon points="1,4 0,4 0.5,3.5" fill="#ff9900"/><polygon points="0,4 0,3 0.5,3.5" fill="#fff5eb"/><polygon points="2,3 3,3 2.5,3.5" fill="#ff9900"/><polygon points="3,3 3,4 2.5,3.5" fill="#fff5eb"/><polygon points="3,4 2,4 2.5,3.5" fill="#ff9900"/><polygon points="2,4 2,3 2.5,3.5" fill="#fdea14"/><polygon points="1,4 2,4 1.5,4.5" fill="#fdea14"/><polygon points="2,4 2,5 1.5,4.5" fill="#ff9900"/><polygon points="2,5 1,5 1.5,4.5" fill="#fff5eb"/><polygon points="1,5 1,4 1.5,4.5" fill="#ff9900"/><polygon points="3.5,2.5 4,3 3,4 2.5,3.5" fill="#fff5eb"/><polygon points="4,2 5,2 4,3" fill="#fff5eb"/><polygon points="2,4 3,4 2,5" fill="#fff5eb"/><polygon points="5,2 5,5 2,5" fill="#cc0099"/><polygon points="5,0 6,0 6,4 5,4" fill="#fff5eb"/><polygon points="0,5 4,5 4,6 0,6" fill="#fff5eb"/><polygon points="5,4 6,4 5,5" fill="#cc0099"/><polygon points="4,5 5,5 4,6" fill="#cc0099"/><polygon points="6,4 6,6 4,6" fill="#fff5eb"/><polygon points="1.5,0.5 2.5,1.5 1.5,2.5 0.5,1.5" fill="#fdea14"/><polygon points="3.5,0.5 4.5,1.5 3.5,2.5 2.5,1.5" fill="#fdea14"/><polygon points="1.5,2.5 2.5,3.5 1.5,4.5 0.5,3.5" fill="#fdea14"/></g></svg>
<g filter="url(#shadow)">
<svg x="1050.6" y="407.2" width="112" height="112" viewBox="0 0 12 12" overflow="visible"><g stroke="#1a1a1a" stroke-width="0.06429" stroke-linejoin="miter" stroke-miterlimit="2"><polygon points="0,0 12,0 12,12 0,12" fill="#ffffff"/><polygon points="2,0 4,0 4,2" fill="#ffffff"/><polygon points="0,2 2,4 0,4" fill="#ffffff"/><polygon points="0,0 2,0 0,2" fill="#ff9a0a"/><polygon points="2,0 2,2 0,2" fill="#ffd85a"/><polygon points="2,0 3,1 2,2" fill="#ff9a0a"/><polygon points="0,2 2,2 1,3" fill="#ff9a0a"/><polygon points="3,1 3,3 1,3" fill="#ffd85a"/><polygon points="3,1 4,2 3,3" fill="#ff9a0a"/><polygon points="1,3 3,3 2,4" fill="#ff9a0a"/><polygon points="4,2 4,4 2,4" fill="#ffd85a"/><polygon points="4,0 6,0 6,2" fill="#ffffff"/><polygon points="6,0 8,0 6,2" fill="#ffffff"/><polygon points="4,0 6,2 6,4 4,6" fill="#0a7fae"/><polygon points="8,0 8,4 6,4 6,2" fill="#14c8d2"/><polygon points="6,4 6,6 4,6" fill="#14c8d2"/><polygon points="12,2 12,4 10,4" fill="#ffffff"/><polygon points="10,0 8,2 8,0" fill="#ffffff"/><polygon points="12,0 12,2 10,0" fill="#ff9a0a"/><polygon points="12,2 10,2 10,0" fill="#ffd85a"/><polygon points="12,2 11,3 10,2" fill="#ff9a0a"/><polygon points="10,0 10,2 9,1" fill="#ff9a0a"/><polygon points="11,3 9,3 9,1" fill="#ffd85a"/><polygon points="11,3 10,4 9,3" fill="#ff9a0a"/><polygon points="9,1 9,3 8,2" fill="#ff9a0a"/><polygon points="10,4 8,4 8,2" fill="#ffd85a"/><polygon points="12,4 12,6 10,6" fill="#ffffff"/><polygon points="12,6 12,8 10,6" fill="#ffffff"/><polygon points="12,4 10,6 8,6 6,4" fill="#0a7fae"/><polygon points="12,8 8,8 8,6 10,6" fill="#14c8d2"/><polygon points="8,6 6,6 6,4" fill="#14c8d2"/><polygon points="10,12 8,12 8,10" fill="#ffffff"/><polygon points="12,10 10,8 12,8" fill="#ffffff"/><polygon points="12,12 10,12 12,10" fill="#ff9a0a"/><polygon points="10,12 10,10 12,10" fill="#ffd85a"/><polygon points="10,12 9,11 10,10" fill="#ff9a0a"/><polygon points="12,10 10,10 11,9" fill="#ff9a0a"/><polygon points="9,11 9,9 11,9" fill="#ffd85a"/><polygon points="9,11 8,10 9,9" fill="#ff9a0a"/><polygon points="11,9 9,9 10,8" fill="#ff9a0a"/><polygon points="8,10 8,8 10,8" fill="#ffd85a"/><polygon points="8,12 6,12 6,10" fill="#ffffff"/><polygon points="6,12 4,12 6,10" fill="#ffffff"/><polygon points="8,12 6,10 6,8 8,6" fill="#0a7fae"/><polygon points="4,12 4,8 6,8 6,10" fill="#14c8d2"/><polygon points="6,8 6,6 8,6" fill="#14c8d2"/><polygon points="0,10 0,8 2,8" fill="#ffffff"/><polygon points="2,12 4,10 4,12" fill="#ffffff"/><polygon points="0,12 0,10 2,12" fill="#ff9a0a"/><polygon points="0,10 2,10 2,12" fill="#ffd85a"/><polygon points="0,10 1,9 2,10" fill="#ff9a0a"/><polygon points="2,12 2,10 3,11" fill="#ff9a0a"/><polygon points="1,9 3,9 3,11" fill="#ffd85a"/><polygon points="1,9 2,8 3,9" fill="#ff9a0a"/><polygon points="3,11 3,9 4,10" fill="#ff9a0a"/><polygon points="2,8 4,8 4,10" fill="#ffd85a"/><polygon points="0,8 0,6 2,6" fill="#ffffff"/><polygon points="0,6 0,4 2,6" fill="#ffffff"/><polygon points="0,8 2,6 4,6 6,8" fill="#0a7fae"/><polygon points="0,4 4,4 4,6 2,6" fill="#14c8d2"/><polygon points="4,6 6,6 6,8" fill="#14c8d2"/><polygon points="6,4 6,6 4,6" fill="#14c8d2"/><polygon points="6,4 8,6 6,6" fill="#0a7fae"/><polygon points="8,6 6,8 6,6" fill="#14c8d2"/><polygon points="4,6 6,6 6,8" fill="#0a7fae"/></g></svg>
</g>
<rect x="1015" y="567.2" width="155" height="22.6" fill="#8d9d1e"/>
<text x="1159.6" y="584.4" font-size="13" font-weight="normal" fill="#f4f4e4" text-anchor="end" font-family="Liberation Sans" textLength="69" lengthAdjust="spacingAndGlyphs">Judy Martin</text>
<clipPath id="covclip"><rect x="958" y="353.4" width="212" height="236.4"/></clipPath>
<g clip-path="url(#covclip)"><circle cx="987.4" cy="560.1" r="45.6" fill="#fff"/><circle cx="987.4" cy="560.1" r="44.2" fill="url(#eqg)"/></g>
<g><rect x="975" y="528.2" width="31.4" height="3.6" fill="#555"/><rect x="975" y="531.8" width="31.4" height="43.6" fill="#eebf30"/><rect x="975" y="575.3" width="31.4" height="5.5" fill="#555"/><path d="M980.6 542.4 v-5.6 a3 3 0 0 1 6 0 v5.6 Z M994 542.4 v-5.6 a3 3 0 0 1 6 0 v5.6 Z" fill="#f7df86"/><rect x="975" y="542.4" width="31.4" height="5.4" fill="#d8a824"/><path d="M976 543.4 v4.4 M977.75 543.4 v4.4 M979.5 543.4 v4.4 M981.25 543.4 v4.4 M983 543.4 v4.4 M984.75 543.4 v4.4 M986.5 543.4 v4.4 M988.25 543.4 v4.4 M990 543.4 v4.4 M991.75 543.4 v4.4 M993.5 543.4 v4.4 M995.25 543.4 v4.4 M997 543.4 v4.4 M998.75 543.4 v4.4 M1000.5 543.4 v4.4 M1002.25 543.4 v4.4 M1004 543.4 v4.4 M1005.75 543.4 v4.4" stroke="#f3d870" stroke-width="0.7"/><path d="M975 542.8 h31.4" stroke="#b88a18" stroke-width="0.7"/><path d="M983.7 564.8 c0.4 -6.8 13 -6.8 13.4 0 Z" fill="#f27a1a"/><rect x="985" y="564.8" width="10.9" height="10.5" fill="#f8e08c"/><path d="M990.4 564.8 v10.5" stroke="#d8a824" stroke-width="0.6"/><path d="M976.2 575.3 v-9.6 a2.9 2.9 0 0 1 5.8 0 v9.6 Z M999.2 575.3 v-9.6 a2.9 2.9 0 0 1 5.8 0 v9.6 Z" fill="#f7df86"/><path d="M977.2 568.6 l3.8 4 M981 568.6 l-3.8 4 M1000.2 568.6 l3.8 4 M1004 568.6 l-3.8 4" stroke="#3a8ab0" stroke-width="1"/></g>
<text x="992.6" y="557.8" font-size="12" font-weight="normal" fill="#fff" text-anchor="middle" font-family="Liberation Serif" textLength="19.5" lengthAdjust="spacingAndGlyphs">EQ</text>
<path d="M998 557 c1.6 1.6 3.4 2.2 5.6 2" stroke="#fff" stroke-width="0.7" fill="none"/>
</svg>
</body></html>
